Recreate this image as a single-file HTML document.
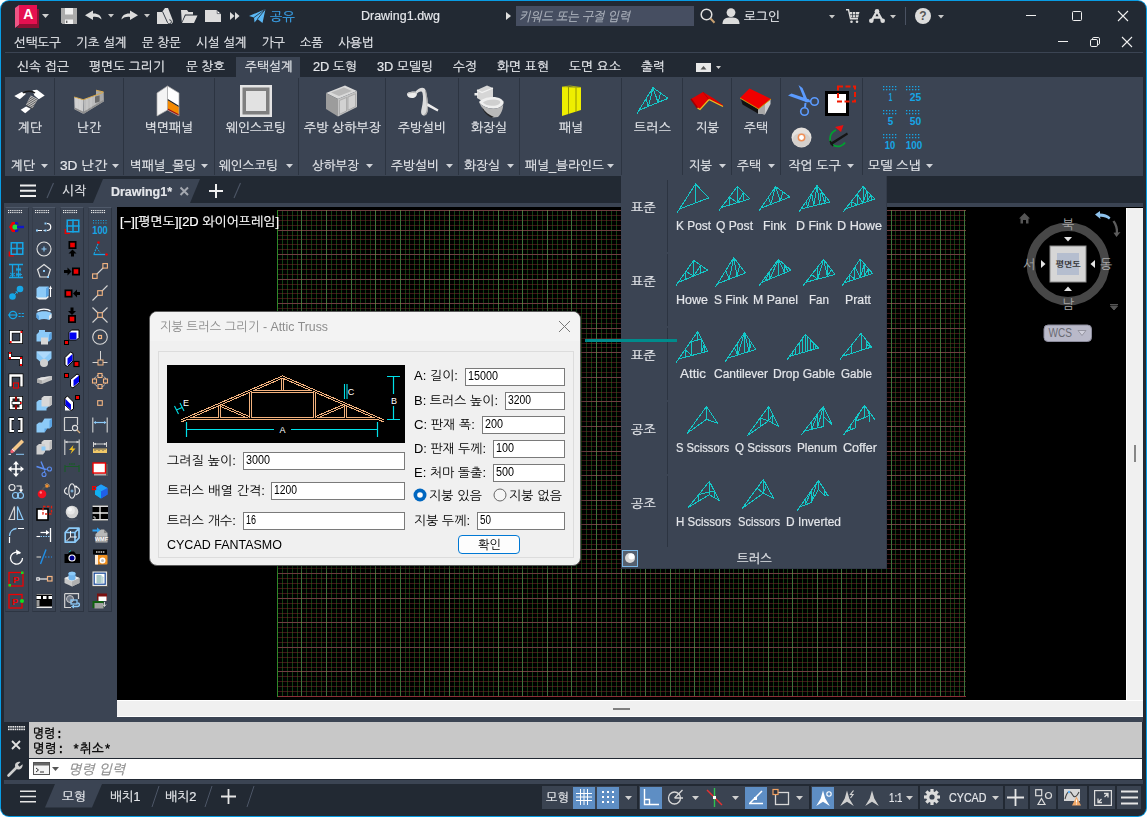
<!DOCTYPE html>
<html lang="ko"><head><meta charset="utf-8"><title>Drawing1.dwg</title>
<style>
html,body{margin:0;padding:0;background:#fff;}
#win{position:relative;width:1147px;height:817px;overflow:hidden;background:#fff;font-family:'Liberation Sans','NanumGothic',sans-serif;}
#win div,#win span.t,#win svg{position:absolute;box-sizing:border-box;}
#win span.t{white-space:nowrap;transform-origin:0 50%;display:block;-webkit-text-stroke:0.2px currentColor;}
svg{overflow:visible}
svg text{font-family:'Liberation Sans','NanumGothic',sans-serif;}
</style></head><body><div id="win">
<div style="left:0px;top:0px;width:1147px;height:817px;background:#089ce4;border-radius:9px;"></div>
<div style="left:1px;top:1px;width:1145px;height:815px;background:#222933;border-radius:8px;"></div>
<span class="t" id="t0" style="left:360.5px;top:7.25px;font:400 13.5px/17.5px 'Liberation Sans','NanumGothic',sans-serif;color:#e4e6ea;transform:scaleX(0.9235);">Drawing1.dwg</span>
<span class="t" id="t1" style="left:269.5px;top:8.75px;font:400 12.5px/16.5px 'Liberation Sans','NanumGothic',sans-serif;color:#3aa0e8;transform:scaleX(1.0631);">공유</span>
<div style="left:516px;top:6px;width:178px;height:20px;background:#464e61;"></div>
<span class="t" id="t2" style="left:518.5px;top:8.75px;font:italic 400 12.5px/16.5px 'Liberation Sans','NanumGothic',sans-serif;color:#aab0ba;transform:scaleX(0.9555);">키워드 또는 구절 입력</span>
<span class="t" id="t3" style="left:743.5px;top:8.75px;font:400 12.5px/16.5px 'Liberation Sans','NanumGothic',sans-serif;color:#e4e6ea;transform:scaleX(1.0208);">로그인</span>
<span class="t" id="t4" style="left:13.5px;top:34.75px;font:400 12.5px/16.5px 'Liberation Sans','NanumGothic',sans-serif;color:#e4e6ea;transform:scaleX(0.9997);">선택도구</span>
<span class="t" id="t5" style="left:75.5px;top:34.75px;font:400 12.5px/16.5px 'Liberation Sans','NanumGothic',sans-serif;color:#e4e6ea;transform:scaleX(1.0102);">기초 설계</span>
<span class="t" id="t6" style="left:141.5px;top:34.75px;font:400 12.5px/16.5px 'Liberation Sans','NanumGothic',sans-serif;color:#e4e6ea;transform:scaleX(1.0069);">문 창문</span>
<span class="t" id="t7" style="left:195.5px;top:34.75px;font:400 12.5px/16.5px 'Liberation Sans','NanumGothic',sans-serif;color:#e4e6ea;transform:scaleX(1.0102);">시설 설계</span>
<span class="t" id="t8" style="left:261.5px;top:34.75px;font:400 12.5px/16.5px 'Liberation Sans','NanumGothic',sans-serif;color:#e4e6ea;transform:scaleX(0.9781);">가구</span>
<span class="t" id="t9" style="left:299.5px;top:34.75px;font:400 12.5px/16.5px 'Liberation Sans','NanumGothic',sans-serif;color:#e4e6ea;transform:scaleX(0.9781);">소품</span>
<span class="t" id="t10" style="left:337.5px;top:34.75px;font:400 12.5px/16.5px 'Liberation Sans','NanumGothic',sans-serif;color:#e4e6ea;transform:scaleX(1.0208);">사용법</span>
<div style="left:5px;top:52px;width:1138px;height:1px;background:#3b4453;"></div>
<div style="left:236px;top:57px;width:64px;height:21px;background:#3b4453;"></div>
<span class="t" id="t11" style="left:16.5px;top:58.75px;font:400 12.5px/16.5px 'Liberation Sans','NanumGothic',sans-serif;color:#e4e6ea;transform:scaleX(1.0300);">신속 접근</span>
<span class="t" id="t12" style="left:88.5px;top:58.75px;font:400 12.5px/16.5px 'Liberation Sans','NanumGothic',sans-serif;color:#e4e6ea;transform:scaleX(1.0272);">평면도 그리기</span>
<span class="t" id="t13" style="left:185.5px;top:58.75px;font:400 12.5px/16.5px 'Liberation Sans','NanumGothic',sans-serif;color:#e4e6ea;transform:scaleX(1.0069);">문 창호</span>
<span class="t" id="t14" style="left:244.5px;top:58.75px;font:400 12.5px/16.5px 'Liberation Sans','NanumGothic',sans-serif;color:#e4e6ea;transform:scaleX(1.0209);">주택설계</span>
<span class="t" id="t15" style="left:312.5px;top:58.75px;font:400 12.5px/16.5px 'Liberation Sans','NanumGothic',sans-serif;color:#e4e6ea;transform:scaleX(1.0244);">2D 도형</span>
<span class="t" id="t16" style="left:376.5px;top:58.75px;font:400 12.5px/16.5px 'Liberation Sans','NanumGothic',sans-serif;color:#e4e6ea;transform:scaleX(1.0237);">3D 모델링</span>
<span class="t" id="t17" style="left:452.5px;top:58.75px;font:400 12.5px/16.5px 'Liberation Sans','NanumGothic',sans-serif;color:#e4e6ea;transform:scaleX(1.0206);">수정</span>
<span class="t" id="t18" style="left:496.5px;top:58.75px;font:400 12.5px/16.5px 'Liberation Sans','NanumGothic',sans-serif;color:#e4e6ea;transform:scaleX(1.0300);">화면 표현</span>
<span class="t" id="t19" style="left:568.5px;top:58.75px;font:400 12.5px/16.5px 'Liberation Sans','NanumGothic',sans-serif;color:#e4e6ea;transform:scaleX(1.0300);">도면 요소</span>
<span class="t" id="t20" style="left:640.5px;top:58.75px;font:400 12.5px/16.5px 'Liberation Sans','NanumGothic',sans-serif;color:#e4e6ea;transform:scaleX(1.0206);">출력</span>
<div style="left:5px;top:77px;width:1138px;height:99px;background:#3b4453;"></div>
<div style="left:54px;top:78px;width:1px;height:97px;background:#2c3441;"></div>
<div style="left:123px;top:78px;width:1px;height:97px;background:#2c3441;"></div>
<div style="left:214px;top:78px;width:1px;height:97px;background:#2c3441;"></div>
<div style="left:298px;top:78px;width:1px;height:97px;background:#2c3441;"></div>
<div style="left:385px;top:78px;width:1px;height:97px;background:#2c3441;"></div>
<div style="left:458px;top:78px;width:1px;height:97px;background:#2c3441;"></div>
<div style="left:519px;top:78px;width:1px;height:97px;background:#2c3441;"></div>
<div style="left:621px;top:78px;width:1px;height:97px;background:#2c3441;"></div>
<div style="left:682px;top:78px;width:1px;height:97px;background:#2c3441;"></div>
<div style="left:731px;top:78px;width:1px;height:97px;background:#2c3441;"></div>
<div style="left:780px;top:78px;width:1px;height:97px;background:#2c3441;"></div>
<div style="left:862px;top:78px;width:1px;height:97px;background:#2c3441;"></div>
<span class="t" id="t21" style="left:17.5px;top:119.75px;font:400 12.5px/16.5px 'Liberation Sans','NanumGothic',sans-serif;color:#e4e6ea;transform:scaleX(1.0206);">계단</span>
<span class="t" id="t22" style="left:76.5px;top:119.75px;font:400 12.5px/16.5px 'Liberation Sans','NanumGothic',sans-serif;color:#e4e6ea;transform:scaleX(1.0206);">난간</span>
<span class="t" id="t23" style="left:144.5px;top:119.75px;font:400 12.5px/16.5px 'Liberation Sans','NanumGothic',sans-serif;color:#e4e6ea;transform:scaleX(1.0209);">벽면패널</span>
<span class="t" id="t24" style="left:225.5px;top:119.75px;font:400 12.5px/16.5px 'Liberation Sans','NanumGothic',sans-serif;color:#e4e6ea;transform:scaleX(1.0210);">웨인스코팅</span>
<span class="t" id="t25" style="left:303.5px;top:119.75px;font:400 12.5px/16.5px 'Liberation Sans','NanumGothic',sans-serif;color:#e4e6ea;transform:scaleX(1.0408);">주방 상하부장</span>
<span class="t" id="t26" style="left:397.5px;top:119.75px;font:400 12.5px/16.5px 'Liberation Sans','NanumGothic',sans-serif;color:#e4e6ea;transform:scaleX(1.0209);">주방설비</span>
<span class="t" id="t27" style="left:470.5px;top:119.75px;font:400 12.5px/16.5px 'Liberation Sans','NanumGothic',sans-serif;color:#e4e6ea;transform:scaleX(1.0208);">화장실</span>
<span class="t" id="t28" style="left:558.5px;top:119.75px;font:400 12.5px/16.5px 'Liberation Sans','NanumGothic',sans-serif;color:#e4e6ea;transform:scaleX(1.0206);">패널</span>
<span class="t" id="t29" style="left:633.5px;top:119.75px;font:400 12.5px/16.5px 'Liberation Sans','NanumGothic',sans-serif;color:#e4e6ea;transform:scaleX(1.0492);">트러스</span>
<span class="t" id="t30" style="left:695.5px;top:119.75px;font:400 12.5px/16.5px 'Liberation Sans','NanumGothic',sans-serif;color:#e4e6ea;transform:scaleX(0.9781);">지붕</span>
<span class="t" id="t31" style="left:743.5px;top:119.75px;font:400 12.5px/16.5px 'Liberation Sans','NanumGothic',sans-serif;color:#e4e6ea;transform:scaleX(1.0206);">주택</span>
<span class="t" id="t32" style="left:10.5px;top:157.75px;font:400 12.5px/16.5px 'Liberation Sans','NanumGothic',sans-serif;color:#e4e6ea;transform:scaleX(1.0206);">계단</span>
<svg style="left:41px;top:164px;" width="7" height="4" viewBox="0 0 7 4"><path d="M0 0H7L3.5 4Z" fill="#d0d3d8"/></svg>
<span class="t" id="t33" style="left:59.5px;top:157.75px;font:400 12.5px/16.5px 'Liberation Sans','NanumGothic',sans-serif;color:#e4e6ea;transform:scaleX(1.0942);">3D 난간</span>
<svg style="left:112px;top:164px;" width="7" height="4" viewBox="0 0 7 4"><path d="M0 0H7L3.5 4Z" fill="#d0d3d8"/></svg>
<span class="t" id="t34" style="left:129.5px;top:157.75px;font:400 12.5px/16.5px 'Liberation Sans','NanumGothic',sans-serif;color:#e4e6ea;transform:scaleX(1.0045);">벽패널_몰딩</span>
<svg style="left:201px;top:164px;" width="7" height="4" viewBox="0 0 7 4"><path d="M0 0H7L3.5 4Z" fill="#d0d3d8"/></svg>
<span class="t" id="t35" style="left:218.5px;top:157.75px;font:400 12.5px/16.5px 'Liberation Sans','NanumGothic',sans-serif;color:#e4e6ea;transform:scaleX(1.0040);">웨인스코팅</span>
<svg style="left:286px;top:164px;" width="7" height="4" viewBox="0 0 7 4"><path d="M0 0H7L3.5 4Z" fill="#d0d3d8"/></svg>
<span class="t" id="t36" style="left:311.5px;top:157.75px;font:400 12.5px/16.5px 'Liberation Sans','NanumGothic',sans-serif;color:#e4e6ea;transform:scaleX(0.9997);">상하부장</span>
<svg style="left:366px;top:164px;" width="7" height="4" viewBox="0 0 7 4"><path d="M0 0H7L3.5 4Z" fill="#d0d3d8"/></svg>
<span class="t" id="t37" style="left:390.5px;top:157.75px;font:400 12.5px/16.5px 'Liberation Sans','NanumGothic',sans-serif;color:#e4e6ea;transform:scaleX(1.0209);">주방설비</span>
<svg style="left:446px;top:164px;" width="7" height="4" viewBox="0 0 7 4"><path d="M0 0H7L3.5 4Z" fill="#d0d3d8"/></svg>
<span class="t" id="t38" style="left:463.5px;top:157.75px;font:400 12.5px/16.5px 'Liberation Sans','NanumGothic',sans-serif;color:#e4e6ea;transform:scaleX(1.0208);">화장실</span>
<svg style="left:507px;top:164px;" width="7" height="4" viewBox="0 0 7 4"><path d="M0 0H7L3.5 4Z" fill="#d0d3d8"/></svg>
<span class="t" id="t39" style="left:524.5px;top:157.75px;font:400 12.5px/16.5px 'Liberation Sans','NanumGothic',sans-serif;color:#e4e6ea;transform:scaleX(1.0200);">패널_블라인드</span>
<svg style="left:607px;top:164px;" width="7" height="4" viewBox="0 0 7 4"><path d="M0 0H7L3.5 4Z" fill="#d0d3d8"/></svg>
<span class="t" id="t40" style="left:688.5px;top:157.75px;font:400 12.5px/16.5px 'Liberation Sans','NanumGothic',sans-serif;color:#e4e6ea;transform:scaleX(0.9781);">지붕</span>
<svg style="left:719px;top:164px;" width="7" height="4" viewBox="0 0 7 4"><path d="M0 0H7L3.5 4Z" fill="#d0d3d8"/></svg>
<span class="t" id="t41" style="left:736.5px;top:157.75px;font:400 12.5px/16.5px 'Liberation Sans','NanumGothic',sans-serif;color:#e4e6ea;transform:scaleX(1.0206);">주택</span>
<svg style="left:768px;top:164px;" width="7" height="4" viewBox="0 0 7 4"><path d="M0 0H7L3.5 4Z" fill="#d0d3d8"/></svg>
<span class="t" id="t42" style="left:787.5px;top:157.75px;font:400 12.5px/16.5px 'Liberation Sans','NanumGothic',sans-serif;color:#e4e6ea;transform:scaleX(1.0498);">작업 도구</span>
<svg style="left:847px;top:164px;" width="7" height="4" viewBox="0 0 7 4"><path d="M0 0H7L3.5 4Z" fill="#d0d3d8"/></svg>
<span class="t" id="t43" style="left:867.5px;top:157.75px;font:400 12.5px/16.5px 'Liberation Sans','NanumGothic',sans-serif;color:#e4e6ea;transform:scaleX(1.0498);">모델 스냅</span>
<svg style="left:926px;top:164px;" width="7" height="4" viewBox="0 0 7 4"><path d="M0 0H7L3.5 4Z" fill="#d0d3d8"/></svg>
<div style="left:5px;top:203px;width:1138px;height:5px;background:#3b4453;"></div>
<svg style="left:90px;top:179px;" width="115" height="24" viewBox="0 0 115 24"><path d="M3 24L13 0H110L100 24Z" fill="#3b4453"/></svg>
<span class="t" id="t44" style="left:61.5px;top:183.25px;font:400 12.5px/16.5px 'Liberation Sans','NanumGothic',sans-serif;color:#e4e6ea;transform:scaleX(1.0206);">시작</span>
<span class="t" id="t45" style="left:110.5px;top:183.75px;font:700 12.5px/16.5px 'Liberation Sans','NanumGothic',sans-serif;color:#e4e6ea;transform:scaleX(0.9977);">Drawing1*</span>
<div style="left:4px;top:203px;width:1139px;height:519px;background:#3b4453;"></div>
<div style="left:117px;top:207px;width:1026px;height:510px;background:#f0f0f0;"></div>
<div style="left:117px;top:207px;width:1009px;height:493px;background:#000;"></div>
<div style="left:1126px;top:207px;width:17px;height:1px;background:#000;"></div>
<div style="left:117px;top:700px;width:1026px;height:1px;background:#fff;"></div>
<div style="left:1126px;top:208px;width:1px;height:492px;background:#fff;"></div>
<div style="left:117px;top:716px;width:1026px;height:1px;background:#fff;"></div>
<div style="left:613px;top:708px;width:17px;height:2px;background:#808080;"></div>
<div style="left:1134px;top:445px;width:2px;height:17px;background:#868686;"></div>
<div style="left:5px;top:207px;width:24px;height:405px;background:#3b4453;border:1px solid #2d3542;border-top-color:#4f5969;border-left-color:#353d4b;"></div>
<svg style="left:8px;top:210px;" width="16" height="5" viewBox="0 0 16 5"><rect x="0.0" y="0" width="1.1" height="1.1" fill="#e8e8e8"/><rect x="0.0" y="2" width="1.1" height="1.1" fill="#e8e8e8"/><rect x="1.85" y="0" width="1.1" height="1.1" fill="#e8e8e8"/><rect x="1.85" y="2" width="1.1" height="1.1" fill="#e8e8e8"/><rect x="3.7" y="0" width="1.1" height="1.1" fill="#e8e8e8"/><rect x="3.7" y="2" width="1.1" height="1.1" fill="#e8e8e8"/><rect x="5.550000000000001" y="0" width="1.1" height="1.1" fill="#e8e8e8"/><rect x="5.550000000000001" y="2" width="1.1" height="1.1" fill="#e8e8e8"/><rect x="7.4" y="0" width="1.1" height="1.1" fill="#e8e8e8"/><rect x="7.4" y="2" width="1.1" height="1.1" fill="#e8e8e8"/><rect x="9.25" y="0" width="1.1" height="1.1" fill="#e8e8e8"/><rect x="9.25" y="2" width="1.1" height="1.1" fill="#e8e8e8"/><rect x="11.100000000000001" y="0" width="1.1" height="1.1" fill="#e8e8e8"/><rect x="11.100000000000001" y="2" width="1.1" height="1.1" fill="#e8e8e8"/><rect x="12.950000000000001" y="0" width="1.1" height="1.1" fill="#e8e8e8"/><rect x="12.950000000000001" y="2" width="1.1" height="1.1" fill="#e8e8e8"/></svg>
<div style="left:32px;top:207px;width:24px;height:405px;background:#3b4453;border:1px solid #2d3542;border-top-color:#4f5969;border-left-color:#353d4b;"></div>
<svg style="left:35px;top:210px;" width="16" height="5" viewBox="0 0 16 5"><rect x="0.0" y="0" width="1.1" height="1.1" fill="#e8e8e8"/><rect x="0.0" y="2" width="1.1" height="1.1" fill="#e8e8e8"/><rect x="1.85" y="0" width="1.1" height="1.1" fill="#e8e8e8"/><rect x="1.85" y="2" width="1.1" height="1.1" fill="#e8e8e8"/><rect x="3.7" y="0" width="1.1" height="1.1" fill="#e8e8e8"/><rect x="3.7" y="2" width="1.1" height="1.1" fill="#e8e8e8"/><rect x="5.550000000000001" y="0" width="1.1" height="1.1" fill="#e8e8e8"/><rect x="5.550000000000001" y="2" width="1.1" height="1.1" fill="#e8e8e8"/><rect x="7.4" y="0" width="1.1" height="1.1" fill="#e8e8e8"/><rect x="7.4" y="2" width="1.1" height="1.1" fill="#e8e8e8"/><rect x="9.25" y="0" width="1.1" height="1.1" fill="#e8e8e8"/><rect x="9.25" y="2" width="1.1" height="1.1" fill="#e8e8e8"/><rect x="11.100000000000001" y="0" width="1.1" height="1.1" fill="#e8e8e8"/><rect x="11.100000000000001" y="2" width="1.1" height="1.1" fill="#e8e8e8"/><rect x="12.950000000000001" y="0" width="1.1" height="1.1" fill="#e8e8e8"/><rect x="12.950000000000001" y="2" width="1.1" height="1.1" fill="#e8e8e8"/></svg>
<div style="left:60px;top:207px;width:24px;height:405px;background:#3b4453;border:1px solid #2d3542;border-top-color:#4f5969;border-left-color:#353d4b;"></div>
<svg style="left:63px;top:210px;" width="16" height="5" viewBox="0 0 16 5"><rect x="0.0" y="0" width="1.1" height="1.1" fill="#e8e8e8"/><rect x="0.0" y="2" width="1.1" height="1.1" fill="#e8e8e8"/><rect x="1.85" y="0" width="1.1" height="1.1" fill="#e8e8e8"/><rect x="1.85" y="2" width="1.1" height="1.1" fill="#e8e8e8"/><rect x="3.7" y="0" width="1.1" height="1.1" fill="#e8e8e8"/><rect x="3.7" y="2" width="1.1" height="1.1" fill="#e8e8e8"/><rect x="5.550000000000001" y="0" width="1.1" height="1.1" fill="#e8e8e8"/><rect x="5.550000000000001" y="2" width="1.1" height="1.1" fill="#e8e8e8"/><rect x="7.4" y="0" width="1.1" height="1.1" fill="#e8e8e8"/><rect x="7.4" y="2" width="1.1" height="1.1" fill="#e8e8e8"/><rect x="9.25" y="0" width="1.1" height="1.1" fill="#e8e8e8"/><rect x="9.25" y="2" width="1.1" height="1.1" fill="#e8e8e8"/><rect x="11.100000000000001" y="0" width="1.1" height="1.1" fill="#e8e8e8"/><rect x="11.100000000000001" y="2" width="1.1" height="1.1" fill="#e8e8e8"/><rect x="12.950000000000001" y="0" width="1.1" height="1.1" fill="#e8e8e8"/><rect x="12.950000000000001" y="2" width="1.1" height="1.1" fill="#e8e8e8"/></svg>
<div style="left:88px;top:207px;width:24px;height:405px;background:#3b4453;border:1px solid #2d3542;border-top-color:#4f5969;border-left-color:#353d4b;"></div>
<svg style="left:91px;top:210px;" width="16" height="5" viewBox="0 0 16 5"><rect x="0.0" y="0" width="1.1" height="1.1" fill="#e8e8e8"/><rect x="0.0" y="2" width="1.1" height="1.1" fill="#e8e8e8"/><rect x="1.85" y="0" width="1.1" height="1.1" fill="#e8e8e8"/><rect x="1.85" y="2" width="1.1" height="1.1" fill="#e8e8e8"/><rect x="3.7" y="0" width="1.1" height="1.1" fill="#e8e8e8"/><rect x="3.7" y="2" width="1.1" height="1.1" fill="#e8e8e8"/><rect x="5.550000000000001" y="0" width="1.1" height="1.1" fill="#e8e8e8"/><rect x="5.550000000000001" y="2" width="1.1" height="1.1" fill="#e8e8e8"/><rect x="7.4" y="0" width="1.1" height="1.1" fill="#e8e8e8"/><rect x="7.4" y="2" width="1.1" height="1.1" fill="#e8e8e8"/><rect x="9.25" y="0" width="1.1" height="1.1" fill="#e8e8e8"/><rect x="9.25" y="2" width="1.1" height="1.1" fill="#e8e8e8"/><rect x="11.100000000000001" y="0" width="1.1" height="1.1" fill="#e8e8e8"/><rect x="11.100000000000001" y="2" width="1.1" height="1.1" fill="#e8e8e8"/><rect x="12.950000000000001" y="0" width="1.1" height="1.1" fill="#e8e8e8"/><rect x="12.950000000000001" y="2" width="1.1" height="1.1" fill="#e8e8e8"/></svg>
<svg style="left:8px;top:219px;" width="16" height="16" viewBox="0 0 16 16"><path d="M1 8L4 3H7V5.5H5.5L4 8L5.5 10.5H7V13H4Z" fill="#f00000"/><path d="M7 3H9.5L11 5.5H8.5L7 5.5ZM7 13H9.5L11 10.5H8.5L7 10.5Z" fill="#1018c8"/><circle cx="7" cy="8" r="2.6" fill="#20e040"/><path d="M9 6.8H16V9.2H9Z" fill="#1018c8"/></svg>
<svg style="left:8px;top:241px;" width="16" height="16" viewBox="0 0 16 16"><rect x="3.25" y="1.75" width="11.5" height="11.5" fill="none" stroke="#16a6e6" stroke-width="1.5"/><path d="M9.0 1V14M2.5 7.5H15.5" stroke="#16a6e6" stroke-width="1.5" fill="none" /><path d="M1.3 10.5V14.8H6.0" stroke="#f00000" stroke-width="1.3" fill="none" /></svg>
<svg style="left:8px;top:263px;" width="16" height="16" viewBox="0 0 16 16"><path d="M1 1.5H15M1 14.5H15M4.5 1.5V14.5M10.5 1.5V14.5" stroke="#16a6e6" stroke-width="1.3" fill="none" /><path d="M8 5L13 8M13 5L8 8M8 6.5H13M2 10L7 13M7 10L2 13M8 10L13 13M13 10L8 13M8 11.5H14" stroke="#16a6e6" stroke-width="0.9" fill="none" /></svg>
<svg style="left:8px;top:285px;" width="16" height="16" viewBox="0 0 16 16"><circle cx="4.5" cy="11.5" r="3.3" fill="#16a6e6"/><circle cx="12" cy="4" r="3.3" fill="#16a6e6"/><path d="M7 9L9 7M7.5 6.800H9.300V8.6" stroke="#16a6e6" stroke-width="1" fill="none" /></svg>
<svg style="left:8px;top:307px;" width="16" height="16" viewBox="0 0 16 16"><circle cx="5" cy="8" r="3.6" fill="none" stroke="#16a6e6" stroke-width="1.3"/><path d="M0 8H9.5" stroke="#16a6e6" stroke-width="1.2" fill="none" /><path d="M10.5 6.5H16M10.5 9.5H16" stroke="#16a6e6" stroke-width="1.1" fill="none" stroke-dasharray="2.2 1"/></svg>
<svg style="left:8px;top:329px;" width="16" height="16" viewBox="0 0 16 16"><rect x="1" y="1" width="14" height="14" fill="#000"/><rect x="1.8" y="1.8" width="12.4" height="12.4" fill="#fff"/><rect x="4.2" y="4.2" width="7.6" height="7.6" fill="#3b4453" stroke="#000" stroke-width=".8"/><rect x="12.5" y="2" width="1.8" height="2" fill="#f00000"/><rect x="1.8" y="12" width="1.8" height="2" fill="#f00000"/></svg>
<svg style="left:8px;top:351px;" width="16" height="16" viewBox="0 0 16 16"><path d="M2 1V7H13V15" stroke="#000" stroke-width="3.6" fill="none" /><path d="M2 1.500V7H13V14.5" stroke="#fff" stroke-width="2.2" fill="none" /><rect x="1" y="1" width="2" height="2" fill="#f00000"/><rect x="1" y="6" width="2" height="2" fill="#f00000"/><rect x="12" y="6" width="2" height="2" fill="#f00000"/><rect x="12" y="13" width="2" height="2" fill="#f00000"/></svg>
<svg style="left:8px;top:373px;" width="16" height="16" viewBox="0 0 16 16"><path d="M2.5 14V2.500H13.500V14" stroke="#000" stroke-width="3.8" fill="none" stroke-linejoin="miter"/><path d="M2.5 13.500V2.500H13.500V13.5" stroke="#fff" stroke-width="2.4" fill="none" /><rect x="5.5" y="10" width="5" height="5" fill="#3b4453" stroke="#f00000" stroke-width="1.1"/></svg>
<svg style="left:8px;top:395px;" width="16" height="16" viewBox="0 0 16 16"><rect x="1" y="1" width="14" height="14" fill="#000"/><rect x="1.8" y="1.8" width="12.4" height="12.4" fill="#fff"/><rect x="4.5" y="3.5" width="7" height="3" fill="#222"/><rect x="4.5" y="9.5" width="7" height="3" fill="#222"/><rect x="7" y="1.8" width="2" height="12.4" fill="#900"/><rect x="4" y="6.5" width="9" height="3" fill="#fff" stroke="#000" stroke-width=".7"/><rect x="12" y="7" width="1.5" height="2" fill="#f00000"/></svg>
<svg style="left:8px;top:417px;" width="16" height="16" viewBox="0 0 16 16"><path d="M6 2H2.500V14H6M10 2H13.500V14H10" stroke="#000" stroke-width="3.6" fill="none" /><path d="M6 2H2.500V14H6M10 2H13.500V14H10" stroke="#fff" stroke-width="2.2" fill="none" /></svg>
<svg style="left:8px;top:439px;" width="16" height="16" viewBox="0 0 16 16"><path d="M13.5 0.500L16 3L7 12L4.5 9.500Z" fill="#f6c98a"/><path d="M4.5 9.500L7 12L5.5 13.500C4.5 14.5 3 14.5 2.5 13.500C2 12.5 2.5 11.5 3 11Z" fill="#f06070"/><path d="M3.8 10.200L6.3 12.700L7 12L4.5 9.500Z" fill="#fff"/><path d="M0.5 15.300H3" stroke="#ffffff" stroke-width="1" fill="none" /><path d="M8 15.300H16" stroke="#8ccaf8" stroke-width="1" fill="none" /></svg>
<svg style="left:8px;top:461px;" width="16" height="16" viewBox="0 0 16 16"><path d="M8 1.500V14.500M1.5 8H14.5" stroke="#ffffff" stroke-width="1.6" fill="none" /><path d="M8 0L11 3.500H5ZM8 16L11 12.500H5ZM0 8L3.5 5V11ZM16 8L12.5 5V11Z" fill="#ffffff"/></svg>
<svg style="left:8px;top:483px;" width="16" height="16" viewBox="0 0 16 16"><circle cx="4" cy="4.5" r="3" fill="none" stroke="#e8e8e8" stroke-width="1.1"/><path d="M8.5 3H13V7.5" stroke="#ffffff" stroke-width="1.2" fill="none" /><path d="M10.8 6.500H15.200L13 9.500Z" fill="#ffffff"/><circle cx="7.5" cy="12.5" r="3" fill="none" stroke="#8ccaf8" stroke-width="1.1"/><circle cx="12.5" cy="12.5" r="3" fill="none" stroke="#8ccaf8" stroke-width="1.1"/></svg>
<svg style="left:8px;top:505px;" width="16" height="16" viewBox="0 0 16 16"><path d="M6.5 1.500V14.500H1Z" stroke="#d4d4d4" stroke-width="1.2" fill="none" /><path d="M9.5 1.500V14.500H15Z" stroke="#8ccaf8" stroke-width="1.2" fill="none" /></svg>
<svg style="left:8px;top:527px;" width="16" height="16" viewBox="0 0 16 16"><path d="M1.5 9C1.5 5 4.5 2 8.5 1.5" stroke="#8ccaf8" stroke-width="1.3" fill="none" /><path d="M1.5 10V16M10 1.500H16" stroke="#ffffff" stroke-width="1.2" fill="none" /></svg>
<svg style="left:8px;top:549px;" width="16" height="16" viewBox="0 0 16 16"><path d="M12.3 4.500A6 6 0 1 0 14.5 9" stroke="#ffffff" stroke-width="1.3" fill="none" /><path d="M8 0.500L13 3.500L8.5 6Z" fill="#ffffff"/></svg>
<svg style="left:8px;top:571px;" width="16" height="16" viewBox="0 0 16 16"><rect x="1" y="1.5" width="14" height="13.5" fill="none" stroke="#f00000" stroke-width="1.3"/><text x="8" y="12" font-size="9" font-weight="700" fill="#f00000" text-anchor="middle">P</text><rect x="13" y="0.5" width="2.5" height="2.5" fill="#10e020"/><rect x="0.5" y="13" width="2.5" height="2.5" fill="#10e020"/></svg>
<svg style="left:8px;top:593px;" width="16" height="16" viewBox="0 0 16 16"><rect x="1" y="1.5" width="13" height="13.5" fill="none" stroke="#f00000" stroke-width="1.3"/><text x="7" y="12" font-size="9" font-weight="700" fill="#f00000" text-anchor="middle">P</text><circle cx="14" cy="8" r="2" fill="#10e020"/></svg>
<svg style="left:36px;top:219px;" width="16" height="16" viewBox="0 0 16 16"><path d="M2 11.500H9" stroke="#ffffff" stroke-width="1.2" fill="none" stroke-dasharray="4 1.5"/><path d="M11 4.500C16 4.5 16 11.5 11 11.5" stroke="#ffffff" stroke-width="1.2" fill="none" /><rect x="0" y="10.5" width="2" height="2" fill="#8ccaf8"/><rect x="8.5" y="10.5" width="2" height="2" fill="#8ccaf8"/><rect x="8.5" y="3.5" width="2" height="2" fill="#8ccaf8"/></svg>
<svg style="left:36px;top:241px;" width="16" height="16" viewBox="0 0 16 16"><circle cx="8" cy="8" r="7" fill="none" stroke="#e0e0e0" stroke-width="1.1"/><path d="M8 5.500V10.500M5.5 8H10.5" stroke="#8ccaf8" stroke-width="1.1" fill="none" /></svg>
<svg style="left:36px;top:263px;" width="16" height="16" viewBox="0 0 16 16"><path d="M8 1.500L14.5 6.500L12 14H4L1.5 6.500Z" stroke="#e0e0e0" stroke-width="1.2" fill="none" /><rect x="7" y="7" width="2" height="2" fill="#8ccaf8"/><rect x="11" y="13" width="2" height="2" fill="#8ccaf8"/></svg>
<svg style="left:36px;top:285px;" width="16" height="16" viewBox="0 0 16 16"><path d="M0.5 13L3 14.500H10L12.5 12.500V11H0.500Z" fill="#f0f0f0"/><path d="M0.5 3.500L3 1.500H12.500V10.500L10 12.500H0.500Z" fill="#8ccaf8"/><path d="M10 3.500L12.5 1.500V10.500L10 12.500Z" fill="#5aa4e4"/><path d="M14.5 3V12" stroke="#ffffff" stroke-width="1.1" fill="none" /><path d="M14.5 0.500L16 4H13Z" fill="#ffffff"/></svg>
<svg style="left:36px;top:307px;" width="16" height="16" viewBox="0 0 16 16"><path d="M1.5 4C4 1.5 12 1.5 14.5 4" stroke="#ffffff" stroke-width="1.2" fill="none" /><path d="M0.5 6C4 3.5 12 3.5 15.5 6V10.500L13 13C10 11.5 6 11.5 3 13L0.5 10.500Z" fill="#8ccaf8"/><path d="M13 9L15.5 6.500V10.500L13 13Z" fill="#e8e8e8"/><path d="M0.5 6.500L3 9V13L0.5 10.500Z" fill="#5aa4e4"/></svg>
<svg style="left:36px;top:329px;" width="16" height="16" viewBox="0 0 16 16"><path d="M3 1H9V3H15.500V10L13 12.500H0.500V5.500L3 3Z" fill="#8ccaf8"/><path d="M13 5.500L15.5 3V10L13 12.500Z" fill="#5aa4e4"/><rect x="5" y="8.5" width="7" height="7" fill="#d8d8d8"/></svg>
<svg style="left:36px;top:351px;" width="16" height="16" viewBox="0 0 16 16"><path d="M0.5 0.500H15.500V7.500L8 14L0.5 7.500Z" fill="#8ccaf8"/><path d="M0.5 0.500L8 8L15.5 0.500Z" fill="#aed9fb"/><circle cx="8" cy="12" r="4" fill="#d0d0d0"/></svg>
<svg style="left:36px;top:373px;" width="16" height="16" viewBox="0 0 16 16"><path d="M1 6L5 4.500L16 3V7L6 11L1 9.500Z" fill="#c4c4c4"/><path d="M1 6L5 4.500L16 3L6 7.500Z" fill="#e2e2e2"/><path d="M1 6L6 7.500V11L1 9.500Z" fill="#a8a8a8"/></svg>
<svg style="left:36px;top:395px;" width="16" height="16" viewBox="0 0 16 16"><path d="M0.5 7L3 5H8V11H13L10.5 13.500V15.500H0.500Z" fill="#8ccaf8"/><path d="M5.5 3L8 1H16V9.500L13.5 11.500H5.500Z" fill="#d8d8d8"/><path d="M13.5 3L16 1V9.500L13.5 11.500Z" fill="#bdbdbd"/></svg>
<svg style="left:36px;top:417px;" width="16" height="16" viewBox="0 0 16 16"><path d="M0.5 7.500L3 5.500H6L8.5 1.500H16V9L13.5 11.500H11L8.5 15.500H0.500Z" fill="#8ccaf8"/><path d="M13.5 3.500L16 1.500V9L13.5 11.500ZM8.5 11.500H11L8.5 15.500Z" fill="#5aa4e4"/></svg>
<svg style="left:36px;top:439px;" width="16" height="16" viewBox="0 0 16 16"><path d="M5.5 3L8 1H16V9.500L13.5 11.500H5.500Z" fill="#d8d8d8"/><path d="M13.5 3L16 1V9.500L13.5 11.500Z" fill="#bdbdbd"/><path d="M0.5 7L3 5H9V13L7 15.500H0.500Z" fill="#cfcfcf"/><rect x="5.5" y="7.5" width="4" height="4" fill="#8ccaf8"/></svg>
<svg style="left:36px;top:461px;" width="16" height="16" viewBox="0 0 16 16"><path d="M5 0.500L8.5 9M0.5 5.500L10 8.5" stroke="#5b8cf0" stroke-width="1.4" fill="none" /><circle cx="13.5" cy="8" r="2" fill="none" stroke="#5b8cf0" stroke-width="1.1"/><circle cx="8" cy="13.5" r="2" fill="none" stroke="#5b8cf0" stroke-width="1.1"/><path d="M9.5 8.500L11.5 8M8.8 9.500L8.3 11.5" stroke="#5b8cf0" stroke-width="1.2" fill="none" /></svg>
<svg style="left:36px;top:483px;" width="16" height="16" viewBox="0 0 16 16"><circle cx="6" cy="11" r="4.3" fill="#f01020"/><circle cx="4.8" cy="9.5" r="1.2" fill="#ff8088"/><path d="M6.5 7C7 5 8.5 4 10 4" stroke="#555" stroke-width="1.3" fill="none" /><circle cx="11" cy="3" r="1.8" fill="#f09030"/><path d="M11 0V1M13 1L12.5 1.800M14 3H13M9 1L9.5 1.8" stroke="#f0c080" stroke-width="0.8" fill="none" /></svg>
<svg style="left:36px;top:505px;" width="16" height="16" viewBox="0 0 16 16"><rect x="1" y="4" width="11" height="11" fill="#fff" stroke="#000" stroke-width="1.6"/><rect x="7" y="1.5" width="8.5" height="7.5" fill="none" stroke="#e02010" stroke-width="1.3" stroke-dasharray="2.5 1.5"/></svg>
<svg style="left:36px;top:527px;" width="16" height="16" viewBox="0 0 16 16"><path d="M4.5 5.500H12" stroke="#ffffff" stroke-width="1.2" fill="none" /><path d="M10 3L13.5 5.500L10 8Z" fill="#ffffff"/><path d="M0.5 9.500H4" stroke="#ffffff" stroke-width="1.1" fill="none" /><path d="M4.5 9.500H13.5" stroke="#8ccaf8" stroke-width="1.1" fill="none" stroke-dasharray="1.5 1"/><path d="M14.5 1V15" stroke="#ffffff" stroke-width="1.3" fill="none" /></svg>
<svg style="left:36px;top:549px;" width="16" height="16" viewBox="0 0 16 16"><path d="M4.5 15L10 0.5" stroke="#2090e8" stroke-width="1.4" fill="none" /><path d="M0.5 8H5" stroke="#a0a0a0" stroke-width="1.6" fill="none" /><path d="M9 8H16" stroke="#2a78c0" stroke-width="1.4" fill="none" stroke-dasharray="1.5 1.5"/></svg>
<svg style="left:36px;top:571px;" width="16" height="16" viewBox="0 0 16 16"><path d="M3 8H12" stroke="#ffffff" stroke-width="1.1" fill="none" /><rect x="0.8" y="6.8" width="2.4" height="2.4" fill="#3b4453" stroke="#fff" stroke-width="1"/><rect x="11.5" y="5.5" width="4.5" height="4.5" fill="#3b4453" stroke="#f4b582" stroke-width="1.2"/></svg>
<svg style="left:36px;top:593px;" width="16" height="16" viewBox="0 0 16 16"><rect x="0.5" y="1" width="15.5" height="14" fill="#000"/><rect x="0.5" y="1" width="15.5" height="1" fill="#888"/><rect x="0.5" y="3" width="4.5" height="3" fill="#fff"/><rect x="7" y="3" width="3.5" height="3" fill="#fff"/><rect x="12.5" y="3" width="3.5" height="3" fill="#fff"/><rect x="0.5" y="7" width="3" height="6" fill="#999"/><rect x="0.5" y="13.5" width="15.5" height="1.5" fill="#eee"/></svg>
<svg style="left:64px;top:219px;" width="16" height="16" viewBox="0 0 16 16"><rect x="3.25" y="1.25" width="11.5" height="11.5" fill="none" stroke="#16a6e6" stroke-width="1.5"/><path d="M9.0 0.5V13.5M2.5 7.0H15.5" stroke="#16a6e6" stroke-width="1.5" fill="none" /><path d="M1.3 10.0V14.3H6.0" stroke="#f00000" stroke-width="1.3" fill="none" /></svg>
<svg style="left:64px;top:241px;" width="16" height="16" viewBox="0 0 16 16"><rect x="4.5" y="0" width="8" height="8" fill="#000"/><rect x="6.2" y="1.7" width="4.6" height="4.6" fill="#f00000"/><path d="M8.5 8.500L12.5 12.500H10V15.500H7V12.500H4.500Z" fill="#000"/></svg>
<svg style="left:64px;top:263px;" width="16" height="16" viewBox="0 0 16 16"><rect x="8" y="4.5" width="8" height="8" fill="#000"/><rect x="9.7" y="6.2" width="4.6" height="4.6" fill="#f00000"/><path d="M7.5 8.500L3.5 4.500V7H0V10H3.500V12.500Z" fill="#000"/></svg>
<svg style="left:64px;top:285px;" width="16" height="16" viewBox="0 0 16 16"><rect x="0.5" y="4.5" width="8" height="8" fill="#000"/><rect x="2.2" y="6.2" width="4.6" height="4.6" fill="#f00000"/><path d="M9 8.500L13 4.500V7H16V10H13V12.500Z" fill="#000"/></svg>
<svg style="left:64px;top:307px;" width="16" height="16" viewBox="0 0 16 16"><rect x="4" y="8" width="8" height="8" fill="#000"/><rect x="5.7" y="9.7" width="4.6" height="4.6" fill="#f00000"/><path d="M8 8L12 4H9.500V0.500H6.500V4H4Z" fill="#000"/></svg>
<svg style="left:64px;top:329px;" width="16" height="16" viewBox="0 0 16 16"><path d="M5 3.500L7.5 1H15V8.500L12.5 11H5Z" fill="#fff"/><path d="M5 3.500L7.5 1H15V8.500L12.5 11H5Z" stroke="#000" stroke-width="1" fill="none" /><rect x="5.5" y="3.5" width="7" height="7" fill="#0000f0"/><rect x="0.5" y="11.5" width="4" height="4" fill="#f00000" stroke="#000" stroke-width="1"/></svg>
<svg style="left:64px;top:351px;" width="16" height="16" viewBox="0 0 16 16"><path d="M1 6.500L6.5 1L9 2.500V10L3.5 15.500L1 14Z" fill="#fff"/><path d="M1 6.500L6.5 1L9 2.500V10L3.5 15.500L1 14Z" stroke="#000" stroke-width="1" fill="none" /><path d="M3.5 7.500L8.5 3V9.500L3.5 14.500Z" fill="#0000f0"/><rect x="10" y="10.5" width="5" height="5" fill="#f00000" stroke="#000" stroke-width="1.2"/></svg>
<svg style="left:64px;top:373px;" width="16" height="16" viewBox="0 0 16 16"><rect x="0.5" y="0.5" width="4" height="4" fill="#f00000" stroke="#000" stroke-width="1"/><path d="M6.5 6.500L13 1L15.5 2.500V9.500L9 15L6.5 13.500Z" fill="#fff"/><path d="M6.5 6.500L13 1L15.5 2.500V9.500L9 15L6.5 13.500Z" stroke="#000" stroke-width="1" fill="none" /><path d="M9.5 7L15 2.500V9L9.5 13.500Z" fill="#0000f0"/></svg>
<svg style="left:64px;top:395px;" width="16" height="16" viewBox="0 0 16 16"><path d="M1 3L3.5 1L9.5 7V14L7 15.500H1Z" fill="#fff"/><path d="M1 3L3.5 1L9.5 7V14L7 15.500L1 10Z" stroke="#000" stroke-width="1" fill="none" /><path d="M1.5 4L7 9.500V15L1.5 10Z" fill="#0000f0"/><rect x="11.5" y="0.5" width="4" height="4" fill="#f00000" stroke="#000" stroke-width="1"/></svg>
<svg style="left:64px;top:417px;" width="16" height="16" viewBox="0 0 16 16"><path d="M0.5 0.500H13.500V8M8 13.500H0.500V0.5" stroke="#d4d4d4" stroke-width="1.2" fill="none" /><circle cx="11" cy="11" r="2.6" fill="none" stroke="#e0e0e0" stroke-width="1.1"/><path d="M13 13L16 16" stroke="#d8b080" stroke-width="1.3" fill="none" /></svg>
<svg style="left:64px;top:439px;" width="16" height="16" viewBox="0 0 16 16"><path d="M0.8 0.500V16M15.2 0.500V16M1 3H15" stroke="#d4d4d4" stroke-width="1.1" fill="none" /><path d="M1 3L3.5 1.800V4.200ZM15 3L12.5 1.800V4.200Z" fill="#d4d4d4"/><path d="M9.5 6L5 11H8L6.5 15L11.5 9.500H8.500Z" fill="#f0c020"/></svg>
<svg style="left:64px;top:461px;" width="16" height="16" viewBox="0 0 16 16"><path d="M1 4V11M15 4V11M1 5.500H15" stroke="#1a5a28" stroke-width="1.2" fill="none" /><path d="M5 3H11" stroke="#1a5a28" stroke-width="1.4" fill="none" stroke-dasharray="1.5 .7"/></svg>
<svg style="left:64px;top:483px;" width="16" height="16" viewBox="0 0 16 16"><ellipse cx="8" cy="8" rx="3.2" ry="7.3" fill="none" stroke="#e8e8e8" stroke-width="1.1"/><path d="M3 4.500C-1 7 0 10.5 4 11.500M11 3.500C17 5 17 10 11.5 12" fill="none" stroke="#e8e8e8" stroke-width="1.1"/><path d="M8 6.500V9.500M6.5 8H9.5" stroke="#8ccaf8" stroke-width="1" fill="none" /><path d="M11 2.500L13.5 3L12 5Z" fill="#ffffff"/></svg>
<svg style="left:64px;top:505px;" width="16" height="16" viewBox="0 0 16 16"><ellipse cx="8" cy="14.8" rx="6.5" ry="0.8" fill="#4a5260"/><circle cx="8" cy="7" r="6.3" fill="#d4d4d4"/><circle cx="6.8" cy="5.5" r="4" fill="#e8e8e8"/><circle cx="6" cy="4.5" r="2" fill="#f6f6f6"/></svg>
<svg style="left:64px;top:527px;" width="16" height="16" viewBox="0 0 16 16"><path d="M1.2 5.500H11V15.200H1.200ZM1.2 5.500L5 1.200H15V11L11 15.200M11 5.500L15 1.2" stroke="#8ccaf8" stroke-width="1.7" fill="none" stroke-linejoin="round"/><path d="M6.5 4V10L2.5 14M6.5 10H13" stroke="#ffffff" stroke-width="0.9" fill="none" /></svg>
<svg style="left:64px;top:549px;" width="16" height="16" viewBox="0 0 16 16"><path d="M0.5 5H4L6 2.500H10L12 5H16V14H0.500Z" fill="#000"/><circle cx="8" cy="9" r="3.6" fill="#fff"/><circle cx="8" cy="9" r="2.5" fill="#000090"/><path d="M5 3L7 1.5" stroke="#10b0b0" stroke-width="1" fill="none" /></svg>
<svg style="left:64px;top:571px;" width="16" height="16" viewBox="0 0 16 16"><path d="M0.5 7L8 4L15.5 7V12L8 15.500L0.5 12Z" fill="#c8c8c8"/><path d="M0.5 7L8 4L15.5 7L8 10.500Z" fill="#eaeaea"/><path d="M8 10.500L15.5 7V12L8 15.500Z" fill="#b0b0b0"/><path d="M4.5 2.500C4.5 0 11.5 0 11.5 2.500V7.500C11.5 10 4.5 10 4.5 7.500Z" fill="#70b4ec"/><ellipse cx="8" cy="2.5" rx="3.5" ry="1.8" fill="#8ccaf8"/></svg>
<svg style="left:64px;top:593px;" width="16" height="16" viewBox="0 0 16 16"><path d="M0.7 0.700H14.500V6M7 14.500H0.700V0.7" stroke="#d4d4d4" stroke-width="1.2" fill="none" /><circle cx="6" cy="6" r="3.5" fill="#707886" stroke="#d0d0d0" stroke-width=".9"/><rect x="7" y="7" width="6" height="4" fill="none" stroke="#8ccaf8" stroke-width="1.3"/><path d="M9 13.500H13.500C16 13.5 16 10 13.5 10" stroke="#8ccaf8" stroke-width="1.4" fill="none" /><path d="M7 13.500L10 11.500V15.500Z" fill="#8ccaf8"/></svg>
<svg style="left:92px;top:219px;" width="16" height="16" viewBox="0 0 16 16"><rect x="1.0" y="1.0" width="1" height="1" fill="#16a6e6"/><rect x="1.0" y="3.5" width="1" height="1" fill="#16a6e6"/><rect x="3.5" y="1.0" width="1" height="1" fill="#16a6e6"/><rect x="3.5" y="3.5" width="1" height="1" fill="#16a6e6"/><rect x="6.0" y="1.0" width="1" height="1" fill="#16a6e6"/><rect x="6.0" y="3.5" width="1" height="1" fill="#16a6e6"/><rect x="8.5" y="1.0" width="1" height="1" fill="#16a6e6"/><rect x="8.5" y="3.5" width="1" height="1" fill="#16a6e6"/><rect x="11.0" y="1.0" width="1" height="1" fill="#16a6e6"/><rect x="11.0" y="3.5" width="1" height="1" fill="#16a6e6"/><rect x="13.5" y="1.0" width="1" height="1" fill="#16a6e6"/><rect x="13.5" y="3.5" width="1" height="1" fill="#16a6e6"/><text x="8" y="15" font-size="10" font-weight="700" fill="#16a6e6" text-anchor="middle" textLength="15.5" lengthAdjust="spacingAndGlyphs">100</text></svg>
<svg style="left:92px;top:241px;" width="16" height="16" viewBox="0 0 16 16"><path d="M1.5 13.500H13.5" stroke="#16a6e6" stroke-width="1.3" fill="none" /><path d="M2 13L6.5 1.5" stroke="#16a6e6" stroke-width="1.1" fill="none" stroke-dasharray="2 1"/><path d="M5 7L8 11.5" stroke="#16a6e6" stroke-width="1" fill="none" stroke-dasharray="1.5 1"/><circle cx="6.5" cy="1.5" r="1.3" fill="#f00000"/><circle cx="14.5" cy="13.5" r="1.3" fill="#f00000"/></svg>
<svg style="left:92px;top:263px;" width="16" height="16" viewBox="0 0 16 16"><path d="M3.5 12.500L12.5 3.5" stroke="#d4d4d4" stroke-width="1.1" fill="none" /><rect x="0.6" y="10.9" width="4.5" height="4.5" fill="#3b4453" stroke="#f4b582" stroke-width="1.1"/><rect x="10.9" y="0.6" width="4.5" height="4.5" fill="#3b4453" stroke="#f4b582" stroke-width="1.1"/></svg>
<svg style="left:92px;top:285px;" width="16" height="16" viewBox="0 0 16 16"><path d="M0.5 15.500L15.5 0.5" stroke="#d4d4d4" stroke-width="1.1" fill="none" /><rect x="5.7" y="5.7" width="4.6" height="4.6" fill="#3b4453" stroke="#f4b582" stroke-width="1.1"/></svg>
<svg style="left:92px;top:307px;" width="16" height="16" viewBox="0 0 16 16"><path d="M0.5 0.500L15.5 15.500M15.5 0.500L0.5 15.5" stroke="#d4d4d4" stroke-width="1.1" fill="none" /><rect x="5.7" y="5.7" width="4.6" height="4.6" fill="#3b4453" stroke="#f4b582" stroke-width="1.1"/></svg>
<svg style="left:92px;top:329px;" width="16" height="16" viewBox="0 0 16 16"><circle cx="8" cy="8" r="7.3" fill="none" stroke="#d8d8d8" stroke-width="1.1"/><rect x="6.5" y="6.5" width="3" height="3" fill="none" stroke="#f4b582" stroke-width="1.2"/></svg>
<svg style="left:92px;top:351px;" width="16" height="16" viewBox="0 0 16 16"><path d="M8.5 0V11M0.5 11.5H15.5" stroke="#d4d4d4" stroke-width="1" fill="none" /><rect x="6" y="9" width="5" height="5" fill="#3b4453" stroke="#f4b582" stroke-width="1"/></svg>
<svg style="left:92px;top:373px;" width="16" height="16" viewBox="0 0 16 16"><circle cx="8" cy="8" r="6" fill="none" stroke="#c4c8cc" stroke-width="1" stroke-dasharray="3 1"/><rect x="6" y="0.5" width="4" height="4" fill="#3b4453" stroke="#f4b582" stroke-width="1.1"/><rect x="6" y="11.5" width="4" height="4" fill="#3b4453" stroke="#f4b582" stroke-width="1.1"/><rect x="0.5" y="6" width="4" height="4" fill="#3b4453" stroke="#f4b582" stroke-width="1.1"/><rect x="11.5" y="6" width="4" height="4" fill="#3b4453" stroke="#f4b582" stroke-width="1.1"/></svg>
<svg style="left:92px;top:395px;" width="16" height="16" viewBox="0 0 16 16"><rect x="5.7" y="5.7" width="4.6" height="4.6" fill="none" stroke="#f4b582" stroke-width="1.1"/></svg>
<svg style="left:92px;top:417px;" width="16" height="16" viewBox="0 0 16 16"><path d="M0.8 0.500V15.500M15.2 0.500V15.5" stroke="#d4d4d4" stroke-width="1.1" fill="none" /><path d="M2 5.500H14" stroke="#8ccaf8" stroke-width="1.2" fill="none" /><path d="M1.5 5.500L4 4V7ZM14.5 5.500L12 4V7Z" fill="#8ccaf8"/></svg>
<svg style="left:92px;top:439px;" width="16" height="16" viewBox="0 0 16 16"><path d="M1.5 3V8M14.5 3V8M2 5H14" stroke="#d4d4d4" stroke-width="1" fill="none" /><path d="M1.5 5L4 3.800V6.200ZM14.5 5L12 3.800V6.200Z" fill="#d4d4d4"/><rect x="1" y="9.5" width="14" height="4.5" fill="#f0c868"/><path d="M3 9.500V12M5 9.500V11M7 9.500V12M9 9.500V11M11 9.500V12M13 9.500V11" stroke="#3b4453" stroke-width="0.8" fill="none" /></svg>
<svg style="left:92px;top:461px;" width="16" height="16" viewBox="0 0 16 16"><rect x="2" y="3" width="14" height="11.5" fill="#b0b0b0"/><rect x="14" y="3" width="2" height="11.5" fill="#000" opacity=".5"/><rect x="1" y="2" width="12.5" height="10" fill="#fff" stroke="#f00000" stroke-width="1.4"/></svg>
<svg style="left:92px;top:483px;" width="16" height="16" viewBox="0 0 16 16"><path d="M3 5L9 1.500L15.5 5V11.500L9 15.500L3 11.500Z" fill="#1880f0"/><path d="M3 5L9 1.500L15.5 5L9 8.500Z" fill="#20a0f8"/><path d="M3 5L9 8.500V15.500L3 11.500Z" fill="#10b0f0"/><path d="M9 8.500L15.5 5V11.500L9 15.500Z" fill="#2060e8"/><rect x="0.6" y="3.6" width="3" height="3" fill="none" stroke="#f00000" stroke-width="1.2"/></svg>
<svg style="left:92px;top:505px;" width="16" height="16" viewBox="0 0 16 16"><rect x="0.5" y="0.5" width="15.5" height="15" fill="#000"/><rect x="0.5" y="0.5" width="15.5" height="1.5" fill="#ddd"/><rect x="0.5" y="14" width="15.5" height="1.5" fill="#ddd"/><path d="M8 2V14M0.5 8H16" stroke="#e8e8e8" stroke-width="1.3" fill="none" /><path d="M2 11V13H4" stroke="#ccc" stroke-width="1" fill="none" /></svg>
<svg style="left:92px;top:527px;" width="16" height="16" viewBox="0 0 16 16"><path d="M0.5 3.500H6" stroke="#30a0f0" stroke-width="2" fill="none" /><path d="M5 0.500L9 3.500L5 6.500Z" fill="#30a0f0"/><path d="M3.5 7L9 2.500H12L15.5 6V15.500H3.500Z" fill="#b8b8b8"/><path d="M12 2.500L15.5 6H12Z" fill="#888"/><rect x="3.5" y="9.5" width="12" height="5" fill="#8a8a8a"/><text x="9.5" y="14" font-size="5.5" font-weight="700" fill="#fff" text-anchor="middle">WMF</text></svg>
<svg style="left:92px;top:549px;" width="16" height="16" viewBox="0 0 16 16"><rect x="1" y="0.5" width="14" height="5" fill="#000"/><path d="M4 3H13" stroke="#ccc" stroke-width="1.6" fill="none" stroke-dasharray="1.5 .8"/><rect x="3" y="6" width="12.5" height="9.5" rx="1" fill="#f09020"/><rect x="3" y="6" width="3" height="9.5" fill="#fff" opacity=".85"/><circle cx="10.5" cy="11.5" r="3" fill="#fff"/><circle cx="10.5" cy="11.5" r="1.5" fill="#bbb"/></svg>
<svg style="left:92px;top:571px;" width="16" height="16" viewBox="0 0 16 16"><rect x="0.5" y="0.5" width="15.5" height="15.5" fill="#555"/><rect x="0.5" y="0.5" width="14.5" height="14.5" fill="#e6e6e6"/><rect x="2.2" y="2.2" width="11" height="11" fill="#fff" stroke="#1a4a9a" stroke-width="1.2"/><path d="M4.5 4H9L11.5 6.500V12H4.500Z" fill="#a8c8c8"/><path d="M10 5V12M11.5 7V12" stroke="#e8f0f0" stroke-width="0.8" fill="none" /></svg>
<svg style="left:92px;top:593px;" width="16" height="16" viewBox="0 0 16 16"><rect x="5" y="0.5" width="10" height="7" fill="#7a1010"/><rect x="6.5" y="3.5" width="8" height="4.5" fill="#fff"/><rect x="0.5" y="8" width="11" height="7" fill="#106010"/><rect x="2.5" y="10" width="9" height="5.5" fill="#a0a0a0"/><path d="M12.5 9V13M11 11.500L12.5 13.500L14 11.5" stroke="#ddd" stroke-width="0.9" fill="none" /></svg>
<div style="left:4px;top:722px;width:1139px;height:61px;background:#222933;"></div>
<div style="left:4px;top:780px;width:1139px;height:4px;background:#3b4453;"></div>
<div style="left:29px;top:722px;width:1113px;height:36px;background:#c8c8c8;"></div>
<div style="left:29px;top:759px;width:1113px;height:20px;background:#fff;"></div>
<span class="t" id="t46" style="left:32.5px;top:725.5px;font:400 13px/17px 'Liberation Mono','NanumGothic',monospace;color:#000;transform:scaleX(0.9302);-webkit-text-stroke:0.35px #000;">명령:</span>
<span class="t" id="t47" style="left:32.5px;top:741.0px;font:400 13px/17px 'Liberation Mono','NanumGothic',monospace;color:#000;transform:scaleX(0.9801);-webkit-text-stroke:0.35px #000;">명령: *취소*</span>
<span class="t" id="t48" style="left:67.5px;top:761.0px;font:italic 400 13px/17px 'Liberation Sans','NanumGothic',sans-serif;color:#909090;transform:scaleX(1.0857);">명령 입력</span>
<svg style="left:8px;top:726px;" width="18" height="5" viewBox="0 0 18 5"><rect x="0.0" y="0.0" width="1.6" height="1.6" fill="#e8e8e8"/><rect x="0.0" y="2.6" width="1.6" height="1.6" fill="#e8e8e8"/><rect x="2.2" y="0.0" width="1.6" height="1.6" fill="#e8e8e8"/><rect x="2.2" y="2.6" width="1.6" height="1.6" fill="#e8e8e8"/><rect x="4.4" y="0.0" width="1.6" height="1.6" fill="#e8e8e8"/><rect x="4.4" y="2.6" width="1.6" height="1.6" fill="#e8e8e8"/><rect x="6.6000000000000005" y="0.0" width="1.6" height="1.6" fill="#e8e8e8"/><rect x="6.6000000000000005" y="2.6" width="1.6" height="1.6" fill="#e8e8e8"/><rect x="8.8" y="0.0" width="1.6" height="1.6" fill="#e8e8e8"/><rect x="8.8" y="2.6" width="1.6" height="1.6" fill="#e8e8e8"/><rect x="11.0" y="0.0" width="1.6" height="1.6" fill="#e8e8e8"/><rect x="11.0" y="2.6" width="1.6" height="1.6" fill="#e8e8e8"/><rect x="13.200000000000001" y="0.0" width="1.6" height="1.6" fill="#e8e8e8"/><rect x="13.200000000000001" y="2.6" width="1.6" height="1.6" fill="#e8e8e8"/><rect x="15.400000000000002" y="0.0" width="1.6" height="1.6" fill="#e8e8e8"/><rect x="15.400000000000002" y="2.6" width="1.6" height="1.6" fill="#e8e8e8"/></svg>
<svg style="left:11px;top:740px;" width="10" height="10" viewBox="0 0 10 10"><path d="M1 1L9 9M9 1L1 9" stroke="#e0e0e0" stroke-width="1.8"/></svg>
<svg style="left:7px;top:761px;" width="17" height="16" viewBox="0 0 17 16"><path d="M1.5 14.500L9 7" stroke="#cfcfcf" stroke-width="2.6" stroke-linecap="round"/><path d="M8 4.500C8 2 10.5 0 13.5 1L10.8 3.800L12.5 5.800L15.5 3.200C16.2 6 14 8.8 11 8.500C9 8.2 8 6.5 8 4.500Z" fill="#cfcfcf"/></svg>
<svg style="left:33px;top:762px;" width="17" height="13" viewBox="0 0 17 13"><rect x=".5" y=".5" width="16" height="12" fill="#f4f4f4" stroke="#555" stroke-width="1"/><rect x="1" y="1" width="15" height="2.5" fill="#666"/><path d="M3 6L5.5 8L3 10M7 10H11" stroke="#333" stroke-width="1" fill="none"/></svg>
<svg style="left:52px;top:767px;" width="7" height="4" viewBox="0 0 7 4"><path d="M0 0H7L3.5 4Z" fill="#555"/></svg>
<div style="left:1px;top:784px;width:1145px;height:25px;background:#222933;"></div>
<svg style="left:40px;top:784px;" width="66" height="24" viewBox="0 0 66 24"><path d="M5 23.500L15 0H62L52 23.500Z" fill="#3b4453"/></svg>
<span class="t" id="t49" style="left:62.0px;top:789.25px;font:400 12.5px/16.5px 'Liberation Sans','NanumGothic',sans-serif;color:#e4e6ea;transform:scaleX(1.0206);">모형</span>
<span class="t" id="t50" style="left:110.0px;top:789.25px;font:400 12.5px/16.5px 'Liberation Sans','NanumGothic',sans-serif;color:#e4e6ea;transform:scaleX(1.0015);">배치1</span>
<span class="t" id="t51" style="left:165.0px;top:789.25px;font:400 12.5px/16.5px 'Liberation Sans','NanumGothic',sans-serif;color:#e4e6ea;transform:scaleX(1.0344);">배치2</span>
<svg style="left:20px;top:790px;" width="17" height="13" viewBox="0 0 17 13"><path d="M0 1.200H16M0 6.500H16M0 11.800H16" stroke="#e6e6e6" stroke-width="1.6"/></svg>
<svg style="left:151px;top:786px;" width="9" height="21" viewBox="0 0 9 21"><path d="M8 0L1 21" stroke="#4c5566" stroke-width="1"/></svg>
<svg style="left:204px;top:786px;" width="9" height="21" viewBox="0 0 9 21"><path d="M8 0L1 21" stroke="#4c5566" stroke-width="1"/></svg>
<svg style="left:246px;top:786px;" width="9" height="21" viewBox="0 0 9 21"><path d="M8 0L1 21" stroke="#4c5566" stroke-width="1"/></svg>
<svg style="left:221px;top:789px;" width="15" height="15" viewBox="0 0 15 15"><path d="M7.5 0V15M0 7.500H15" stroke="#e6e6e6" stroke-width="1.8"/></svg>
<div style="left:542px;top:786px;width:95px;height:23px;background:#3a4351;"></div>
<div style="left:639px;top:786px;width:170px;height:23px;background:#3a4351;"></div>
<div style="left:811px;top:786px;width:107px;height:23px;background:#3a4351;"></div>
<div style="left:920px;top:786px;width:83px;height:23px;background:#3a4351;"></div>
<div style="left:1005px;top:786px;width:23px;height:23px;background:#3a4351;"></div>
<div style="left:1030px;top:786px;width:26px;height:23px;background:#3a4351;"></div>
<div style="left:1058px;top:786px;width:29px;height:23px;background:#3a4351;"></div>
<div style="left:1089px;top:786px;width:26px;height:23px;background:#3a4351;"></div>
<div style="left:1117px;top:786px;width:24px;height:23px;background:#3a4351;"></div>
<span class="t" id="t52" style="left:545.5px;top:789.75px;font:400 12.5px/16.5px 'Liberation Sans','NanumGothic',sans-serif;color:#e4e6ea;transform:scaleX(0.9781);">모형</span>
<div style="left:573px;top:786.5px;width:22px;height:22px;background:#5e8ec4;"></div>
<div style="left:597px;top:786.5px;width:22px;height:22px;background:#5e8ec4;"></div>
<div style="left:640px;top:786.5px;width:22px;height:22px;background:#5e8ec4;"></div>
<div style="left:745px;top:786.5px;width:22px;height:22px;background:#5e8ec4;"></div>
<div style="left:812px;top:786.5px;width:22px;height:22px;background:#5e8ec4;"></div>
<svg style="left:624.5px;top:795.5px;" width="7" height="4" viewBox="0 0 7 4"><path d="M0 0H7L3.5 4Z" fill="#d0d0d0"/></svg>
<svg style="left:691.5px;top:795.5px;" width="7" height="4" viewBox="0 0 7 4"><path d="M0 0H7L3.5 4Z" fill="#d0d0d0"/></svg>
<svg style="left:731.5px;top:795.5px;" width="7" height="4" viewBox="0 0 7 4"><path d="M0 0H7L3.5 4Z" fill="#d0d0d0"/></svg>
<svg style="left:796.0px;top:795.5px;" width="7" height="4" viewBox="0 0 7 4"><path d="M0 0H7L3.5 4Z" fill="#d0d0d0"/></svg>
<svg style="left:906.0px;top:795.5px;" width="7" height="4" viewBox="0 0 7 4"><path d="M0 0H7L3.5 4Z" fill="#d0d0d0"/></svg>
<svg style="left:991.5px;top:795.5px;" width="7" height="4" viewBox="0 0 7 4"><path d="M0 0H7L3.5 4Z" fill="#d0d0d0"/></svg>
<svg style="left:576px;top:789px;" width="16" height="16" viewBox="0 0 16 16"><path d="M4.5 0V16M11.5 0V16M0 4.500H16M0 11.500H16M8 0V16M0 8H16" stroke="#fff" stroke-width="1"/></svg>
<svg style="left:600px;top:789px;" width="16" height="16" viewBox="0 0 16 16"><rect x="2" y="2" width="2" height="2" fill="#fff"/><rect x="2" y="7" width="2" height="2" fill="#fff"/><rect x="2" y="12" width="2" height="2" fill="#fff"/><rect x="7" y="2" width="2" height="2" fill="#fff"/><rect x="7" y="7" width="2" height="2" fill="#fff"/><rect x="7" y="12" width="2" height="2" fill="#fff"/><rect x="12" y="2" width="2" height="2" fill="#fff"/><rect x="12" y="7" width="2" height="2" fill="#fff"/><rect x="12" y="12" width="2" height="2" fill="#fff"/></svg>
<svg style="left:643px;top:789px;" width="16" height="17" viewBox="0 0 16 17"><path d="M1.5 0V15.500H16M1.5 10.500H6.500V15.5" stroke="#fff" stroke-width="1.4" fill="none"/></svg>
<svg style="left:667px;top:789px;" width="17" height="17" viewBox="0 0 17 17"><circle cx="7.5" cy="9" r="6" fill="none" stroke="#d8d8d8" stroke-width="1.3"/><path d="M7.5 9L15.5 1M7.5 9H16" stroke="#d8d8d8" stroke-width="1.3"/></svg>
<svg style="left:706px;top:788px;" width="17" height="19" viewBox="0 0 17 19"><path d="M8.5 0V19" stroke="#30c050" stroke-width="1.4"/><path d="M1 2L16 17" stroke="#e83030" stroke-width="1.4"/><rect x="7" y="8" width="3" height="3" fill="#fff"/></svg>
<svg style="left:748px;top:789px;" width="16" height="16" viewBox="0 0 16 16"><path d="M1 14.500H15M2 14L14 2" stroke="#fff" stroke-width="1.5"/><rect x="6" y="8" width="3" height="3" fill="#fff"/></svg>
<svg style="left:772px;top:788px;" width="18" height="18" viewBox="0 0 18 18"><rect x="3.5" y="4.5" width="13" height="12" fill="none" stroke="#d8d8d8" stroke-width="1.3"/><rect x="1" y="1.5" width="5" height="5" fill="#2c3441" stroke="#f0a060" stroke-width="1.2"/></svg>
<svg style="left:815.5px;top:790px;" width="16" height="17" viewBox="0 0 16 17"><path d="M7 0.5L9.3 8.5L13.8 16L7 11.8L0.2 16L4.7 8.5Z" fill="#fff"/><circle cx="13" cy="4" r="2.2" fill="none" stroke="#fff" stroke-width="1.1"/></svg>
<svg style="left:840px;top:790px;" width="16" height="17" viewBox="0 0 16 17"><path d="M7 0.5L9.3 8.5L13.8 16L7 11.8L0.2 16L4.7 8.5Z" fill="#d0d0d0"/><path d="M13.5 0.5L10.5 4.5H13L10.5 8" stroke="#d0d0d0" stroke-width="1.2" fill="none"/></svg>
<svg style="left:864.5px;top:790px;" width="16" height="17" viewBox="0 0 16 17"><path d="M7 0.5L9.3 8.5L13.8 16L7 11.8L0.2 16L4.7 8.5Z" fill="#d0d0d0"/></svg>
<span class="t" id="t53" style="left:888.5px;top:789.75px;font:400 12.5px/16.5px 'Liberation Sans','NanumGothic',sans-serif;color:#e4e6ea;transform:scaleX(0.7763);">1:1</span>
<svg style="left:923px;top:788px;" width="18" height="18" viewBox="0 0 18 18"><g transform="translate(9 9)"><rect x="-1.6" y="-8" width="3.2" height="4" fill="#dcdcdc" transform="rotate(0)"/><rect x="-1.6" y="-8" width="3.2" height="4" fill="#dcdcdc" transform="rotate(45)"/><rect x="-1.6" y="-8" width="3.2" height="4" fill="#dcdcdc" transform="rotate(90)"/><rect x="-1.6" y="-8" width="3.2" height="4" fill="#dcdcdc" transform="rotate(135)"/><rect x="-1.6" y="-8" width="3.2" height="4" fill="#dcdcdc" transform="rotate(180)"/><rect x="-1.6" y="-8" width="3.2" height="4" fill="#dcdcdc" transform="rotate(225)"/><rect x="-1.6" y="-8" width="3.2" height="4" fill="#dcdcdc" transform="rotate(270)"/><rect x="-1.6" y="-8" width="3.2" height="4" fill="#dcdcdc" transform="rotate(315)"/><circle r="5.8" fill="#dcdcdc"/><circle r="2.6" fill="#3a4351"/></g></svg>
<span class="t" id="t54" style="left:949.0px;top:789.75px;font:400 12.5px/16.5px 'Liberation Sans','NanumGothic',sans-serif;color:#e4e6ea;transform:scaleX(0.8568);">CYCAD</span>
<svg style="left:1007px;top:789px;" width="17" height="17" viewBox="0 0 17 17"><path d="M8.5 0V17M0 8.500H17" stroke="#e6e6e6" stroke-width="1.8"/></svg>
<svg style="left:1035px;top:789px;" width="18" height="17" viewBox="0 0 18 17"><rect x=".7" y=".7" width="6" height="6" fill="none" stroke="#dcdcdc" stroke-width="1.2"/><circle cx="13.5" cy="6.5" r="3" fill="none" stroke="#dcdcdc" stroke-width="1.2"/><path d="M6.5 9.500L10 15.500H3Z" fill="none" stroke="#dcdcdc" stroke-width="1.2"/></svg>
<svg style="left:1064px;top:789px;" width="18" height="18" viewBox="0 0 18 18"><rect x="0" y="0" width="16" height="12" fill="#d6d6d6"/><path d="M1 10C3 2 6 1 8 5C10 9 12 9 15 3" stroke="#444" stroke-width="1.1" fill="none"/><circle cx="5" cy="3" r="1.2" fill="#60b0f0"/><path d="M12.5 7.5L17 16.5H8Z" fill="#f2a868"/><path d="M12.5 10.5V13.5M12.5 14.5V15.5" stroke="#fff" stroke-width="1.1"/></svg>
<svg style="left:1094px;top:790px;" width="18" height="16" viewBox="0 0 18 16"><rect x=".6" y=".6" width="16.8" height="14.8" fill="none" stroke="#dcdcdc" stroke-width="1.2"/><path d="M10 3.500H14V7.500M14 3.500L10.5 7M8 12.500H4V8.500M4 12.500L7.5 9" stroke="#dcdcdc" stroke-width="1.3" fill="none"/></svg>
<svg style="left:1121px;top:790px;" width="17" height="15" viewBox="0 0 17 15"><path d="M0 1.500H17M0 7.500H17M0 13.500H17" stroke="#e6e6e6" stroke-width="1.8"/></svg>
<svg style="left:15px;top:5px;" width="24" height="23" viewBox="0 0 24 23"><path d="M0 3L4 0V20L0 23Z" fill="#ee5585"/><path d="M4 4H24V23H2L4 20Z" fill="#8e0f33"/><path d="M4 0H22V19H4Z" fill="#e51050"/><text x="13.3" y="14.3" font-size="14" font-weight="700" fill="#fff" text-anchor="middle" style="font-family:'Liberation Sans',sans-serif">A</text></svg>
<svg style="left:42px;top:14px;" width="7" height="4" viewBox="0 0 7 4"><path d="M0 0H7L3.5 4Z" fill="#d0d0d0"/></svg>
<svg style="left:61px;top:8px;" width="16" height="16" viewBox="0 0 16 16"><path d="M0 0H16V16H1.5L0 14.5Z" fill="#ababab"/><rect x="4" y="0" width="8" height="6.5" fill="#f0f0f0"/><rect x="4" y="11.5" width="8" height="4.5" fill="#f0f0f0"/><rect x="5" y="12.7" width="1.4" height="2.3" fill="#666"/></svg>
<svg style="left:85px;top:10px;" width="17" height="11" viewBox="0 0 17 11"><path d="M0 5.2L8 0.5V3.6C13 3.4 16.2 5.6 16.5 9.5C14 7 11.5 6.6 8 6.9V10Z" fill="#dcdcdc"/></svg>
<svg style="left:108px;top:14px;" width="6" height="3.5" viewBox="0 0 6 3.5"><path d="M0 0H6L3.0 3.5Z" fill="#c8c8c8"/></svg>
<svg style="left:121px;top:10px;" width="17" height="11" viewBox="0 0 17 11"><path d="M17 5.2L9 0.5V3.6C4 3.4 0.8 5.6 0.5 9.5C3 7 5.5 6.6 9 6.9V10Z" fill="#dcdcdc"/></svg>
<svg style="left:144px;top:14px;" width="6" height="3.5" viewBox="0 0 6 3.5"><path d="M0 0H6L3.0 3.5Z" fill="#c8c8c8"/></svg>
<svg style="left:157px;top:8px;" width="16" height="16" viewBox="0 0 16 16"><path d="M0 4H5L8 0H11L15.5 11.5C16.5 14 15.5 16 13 16H0Z" fill="#dcdcdc"/><path d="M5.5 3.5L10.5 14.5M10.5 14.5A2 2 0 1 0 12.3 11.8" stroke="#222933" stroke-width="0.9" fill="none"/></svg>
<svg style="left:181px;top:10px;" width="17" height="13" viewBox="0 0 17 13"><path d="M0 0H6L7.5 2H12V4.5H4L0.8 12Z" fill="#dcdcdc"/><path d="M4.6 5.5H16.5L13 13H1Z" fill="#dcdcdc"/></svg>
<svg style="left:205px;top:10px;" width="16" height="12" viewBox="0 0 16 12"><path d="M0 0H11.5L16 4V12H0Z" fill="#dcdcdc"/><path d="M12 0V3.8H16" fill="#222933" opacity=".0"/><path d="M12.2 0.3L15.8 3.6H12.2Z" fill="#fff" stroke="#222933" stroke-width=".6"/></svg>
<svg style="left:230px;top:12px;" width="10" height="8" viewBox="0 0 10 8"><path d="M0 0L4.5 4L0 8ZM5 0L9.5 4L5 8Z" fill="#dcdcdc"/></svg>
<svg style="left:249px;top:9px;" width="17" height="15" viewBox="0 0 17 15"><path d="M0 7L16.5 0L13.5 14L8.5 10L5.5 13.5L5 8.5Z" fill="#5bb8f5"/><path d="M5 8.5L16.5 0L8.5 10" stroke="#222933" stroke-width=".8" fill="none"/></svg>
<svg style="left:506px;top:12px;" width="5" height="8" viewBox="0 0 5 8"><path d="M0 0L5 4L0 8Z" fill="#e0e0e0"/></svg>
<svg style="left:700px;top:8px;" width="16" height="16" viewBox="0 0 16 16"><circle cx="6.5" cy="6.5" r="5.3" fill="none" stroke="#e0e0e0" stroke-width="1.5"/><path d="M10.5 10.5L14.5 14.8" stroke="#c8a070" stroke-width="2"/></svg>
<svg style="left:722px;top:8px;" width="18" height="16" viewBox="0 0 18 16"><circle cx="9" cy="4.6" r="4.4" fill="#dcdcdc"/><path d="M0.5 16C0.5 10.5 4 9.5 9 9.5S17.5 10.5 17.5 16Z" fill="#dcdcdc"/></svg>
<svg style="left:829px;top:15px;" width="6" height="3.5" viewBox="0 0 6 3.5"><path d="M0 0H6L3.0 3.5Z" fill="#c8c8c8"/></svg>
<svg style="left:846px;top:9px;" width="14" height="15" viewBox="0 0 14 15"><path d="M0 0.8H2.500L4.5 9.800H12" fill="none" stroke="#dcdcdc" stroke-width="1.4"/><path d="M3.5 3H13.500L12.2 8.500H4.700Z" fill="#dcdcdc"/><path d="M6.5 3V8.500M9.5 3V8.500M4 5.700H13" stroke="#222933" stroke-width=".7"/><circle cx="5.5" cy="12.8" r="1.3" fill="#dcdcdc"/><circle cx="11" cy="12.8" r="1.3" fill="#dcdcdc"/></svg>
<svg style="left:869px;top:9px;" width="16" height="14" viewBox="0 0 16 14"><path d="M8 2L2.5 12M8 2L13.5 12M4.5 8.500H11.5" fill="none" stroke="#dcdcdc" stroke-width="2.4" stroke-linejoin="round"/><circle cx="8" cy="2.2" r="2.3" fill="#dcdcdc"/><circle cx="2.3" cy="11.7" r="2.3" fill="#dcdcdc"/><circle cx="13.7" cy="11.7" r="2.3" fill="#dcdcdc"/></svg>
<svg style="left:890px;top:15px;" width="6" height="3.5" viewBox="0 0 6 3.5"><path d="M0 0H6L3.0 3.5Z" fill="#c8c8c8"/></svg>
<div style="left:905px;top:7px;width:1px;height:18px;background:#4a5262;"></div>
<svg style="left:915px;top:8px;" width="16" height="16" viewBox="0 0 16 16"><circle cx="8" cy="8" r="8" fill="#dcdcdc"/><text x="8" y="12.3" font-size="12" font-weight="700" fill="#555" text-anchor="middle" style="font-family:'Liberation Sans',sans-serif">?</text></svg>
<svg style="left:938px;top:15px;" width="6" height="3.5" viewBox="0 0 6 3.5"><path d="M0 0H6L3.0 3.5Z" fill="#c8c8c8"/></svg>
<svg style="left:1026px;top:10px;" width="10" height="11" viewBox="0 0 10 11"><path d="M0 5.5H10" stroke="#f0f0f0" stroke-width="1"/></svg>
<svg style="left:1072px;top:11px;" width="10" height="10" viewBox="0 0 10 10"><rect x=".5" y=".5" width="9" height="9" rx="1" fill="none" stroke="#f0f0f0" stroke-width="1"/></svg>
<svg style="left:1118px;top:11px;" width="10" height="10" viewBox="0 0 10 10"><path d="M0 0L10 10M10 0L0 10" stroke="#f0f0f0" stroke-width="1.1"/></svg>
<svg style="left:1058px;top:36px;" width="10" height="11" viewBox="0 0 10 11"><path d="M0 5.5H10" stroke="#f0f0f0" stroke-width="1"/></svg>
<svg style="left:1090px;top:37px;" width="10" height="10" viewBox="0 0 10 10"><rect x=".5" y="2.5" width="7" height="7" rx="1.3" fill="none" stroke="#f0f0f0" stroke-width="1"/><path d="M2.5 2.3V1.8Q2.5 .5 3.8 .5H8.2Q9.5 .5 9.5 1.8V6.2Q9.5 7.5 8.2 7.5H7.8" fill="none" stroke="#f0f0f0" stroke-width="1"/></svg>
<svg style="left:1122px;top:37px;" width="10" height="10" viewBox="0 0 10 10"><path d="M0 0L10 10M10 0L0 10" stroke="#f0f0f0" stroke-width="1.1"/></svg>
<svg style="left:696px;top:63px;" width="16" height="9" viewBox="0 0 16 9"><rect width="15" height="9" fill="#e8e8e8"/><path d="M4.5 6.5H10.5L7.5 3Z" fill="#555"/></svg>
<svg style="left:716px;top:66px;" width="5" height="3" viewBox="0 0 5 3"><path d="M0 0H5L2.5 3Z" fill="#d0d0d0"/></svg>
<svg style="left:20px;top:184px;" width="17" height="14" viewBox="0 0 17 14"><path d="M0 1.5H16M0 6.7H16M0 12H16" stroke="#eeeeee" stroke-width="2"/></svg>
<svg style="left:46px;top:183px;" width="8" height="16" viewBox="0 0 8 16"><path d="M7.5 0L1 15" stroke="#4c5565" stroke-width="1.1"/></svg>
<svg style="left:180px;top:187px;" width="9" height="9" viewBox="0 0 9 9"><path d="M0.5 0.5L8 8M8 0.5L0.5 8" stroke="#a4a8b0" stroke-width="2"/></svg>
<svg style="left:209px;top:184px;" width="14" height="14" viewBox="0 0 14 14"><path d="M7 0V14M0 7H14" stroke="#f0f0f0" stroke-width="2"/></svg>
<svg style="left:233px;top:183px;" width="8" height="16" viewBox="0 0 8 16"><path d="M7.5 0L1 15" stroke="#4c5565" stroke-width="1.1"/></svg>
<svg style="left:0;top:0" width="1147" height="817" viewBox="0 0 1147 817"><path d="M14.3 96L21.6 92L26.1 93.8L19.8 99.2Z" fill="#fff"/><path d="M32.5 90.2L37 89.7L44.7 95.6L38.8 99.2L34.3 95.6Z" fill="#fff"/><path d="M23 93C26 90.5 32 90.5 35 93" stroke="#1a1a1a" stroke-width="1.5" fill="none"/><path d="M30.7 95.6L37.9 99.2L32.5 108.3L26.1 104.7Z" fill="#d4d4d4"/><path d="M30.2 96.6L37.2 100.2M29.5 98.0L36.5 101.7M28.8 99.5L35.8 103.1M28.0 100.9L35.0 104.5M27.3 102.4L34.3 106.0M26.6 103.8L33.6 107.5M25.9 105.3L32.9 108.9" stroke="#444" stroke-width=".8"/><path d="M20.7 109.7L26.1 106.5L30.7 108.7L25.2 113.3Z" fill="#fff"/><path d="M74.2 97L83.3 99.7V113.7L74.6 109.2Z" fill="#cdcdcd"/><path d="M83.3 99.7L103.2 92.400L103.6 101.5L83.7 113.7Z" fill="#bcbcbc"/><path d="M96 90.2L103.6 92V101.5L96 104Z" fill="#a8a8a8"/><path d="M95 96.5L99.6 95.6V101.5L95 103Z" fill="#6a6a6a"/><path d="M74.6 107.5L83.5 111.8L103.6 99.8V101.5L83.7 113.7L74.6 109.2Z" fill="#8e8e8e"/><path d="M74.2 97L83.3 99.7L103.2 92.400M96 90.2L103.6 92" stroke="#d8a848" stroke-width="1" fill="none"/><path d="M77 98V108M80 99V110M87 98.5V110.5M91 97V108.5" stroke="#e0e0e0" stroke-width=".7" opacity=".6"/></svg>
<svg style="left:157px;top:86px;" width="23" height="31" viewBox="0 0 23 31"><path d="M0 7L10.5 0V24L0 30Z" fill="#f4f4f4"/><path d="M10.5 0L22 7V30L10.5 24Z" fill="#fff"/><path d="M10.5 14L22 21V30L10.5 24Z" fill="#f58a00"/><path d="M10.5 13.5L22 20.5" stroke="#222" stroke-width="1.2"/><path d="M10.5 23.3L22 29.3" stroke="#a01010" stroke-width="1.6"/><path d="M0 7L10.5 0L22 7V30L10.5 24L0 30ZM10.5 0V24" stroke="#aaa" stroke-width=".7" fill="none"/></svg>
<svg style="left:240px;top:85px;" width="32" height="32" viewBox="0 0 32 32"><rect width="32" height="32" fill="#e4e4e4"/><rect x="2.5" y="2.5" width="27" height="27" fill="#7f7f7f"/><rect x="6" y="6" width="20" height="20" fill="#e2e2e2"/></svg>
<svg style="left:326px;top:85px;" width="32" height="32" viewBox="0 0 32 32"><path d="M0 8L19 0.5L31 6L12 14Z" fill="#dadada"/><path d="M5 7.5L18 2.5L26 6L13 11Z" fill="#b9b9b9"/><path d="M0 8L12 14V31.5L0 24Z" fill="#9c9c9c"/><path d="M12 14L31 6V22L12 31.5Z" fill="#c4c4c4"/><path d="M13.5 15.5L20.5 12.5V26L13.5 29.3ZM22 12L29.5 8.8V21.5L22 25.2Z" fill="#d2d2d2" stroke="#999" stroke-width=".6"/></svg>
<svg style="left:406px;top:86px;" width="33" height="30" viewBox="0 0 33 30"><path d="M1 8C1 5.5 11 4.5 11 7C11 10.5 9 12 6 12C3 12 1 10.5 1 8Z" fill="#ececec"/><path d="M1.5 7.500C3.5 6.5 9 6 10.5 7" stroke="#b8b8b8" stroke-width="1" fill="none"/><path d="M9.5 5.500C13 1.5 18 0 19.5 4C21 9 22 15 22 21C22 26 20.5 29.5 18 29.500C15.5 29.5 14.5 27 15.5 23C17 17 17.5 11 16.5 7C15.8 4.5 13 5.5 11 7.500Z" fill="#dcdcdc"/><path d="M19.5 4.500C20.5 10 21.5 16 21.5 21C21.5 25 20.5 28 18.5 29" stroke="#a4a4a4" stroke-width="1.2" fill="none"/><path d="M21.5 17L32.5 23.500L31.5 25.500L21 20Z" fill="#ededed"/></svg>
<svg style="left:474px;top:85px;" width="31" height="33" viewBox="0 0 31 33"><path d="M3 5L13 0.5L19 3V12L8 16L3 13Z" fill="#d6d6d6"/><path d="M3 5L8 7.5L19 3" stroke="#f2f2f2" stroke-width="1.2" fill="none"/><path d="M0.5 8H4V10.5H0.5Z" fill="#eee"/><path d="M5 17C8 13 20 10 27 14C31 16.5 30 21 24 23C17 25 8 22 5 17Z" fill="#efefef"/><path d="M9 17.5C12 15 20 13.5 25 15.5C27.5 17 26 19.5 22 20.5C17 21.5 11 20 9 17.5Z" fill="#cfcfcf"/><path d="M5 17C8 22 17 25 24 23C30 21 31 17 29 15.5C30 22 28 28 24 32L19 32.5C13 30 8 24 5 17Z" fill="#b9b9b9"/><path d="M8 22C11 27 15 30 20 32L17 32.5C12 30 9 26 8 22Z" fill="#222"/></svg>
<svg style="left:562px;top:86px;" width="20" height="31" viewBox="0 0 20 31"><path d="M0 1L19 1.5V24L0 30Z" fill="#eeee00"/><path d="M6.5 1.200V28M14 1.400V26" stroke="#8a8a00" stroke-width=".9"/><path d="M0 1L8 0L19 1.5" stroke="#c8c800" stroke-width=".8" fill="none"/></svg>
<svg style="left:690px;top:91px;" width="34" height="20" viewBox="0 0 34 20"><path d="M1 8L13 1L23 7L33 14V15.5L19 8.5L10 18.5L7.5 17Z" fill="#e00000"/><path d="M1 8L7.5 17" stroke="#a00000" stroke-width="1.5"/><path d="M7.5 17L10 18.5L19 8.5L33 15.5" stroke="#e8c020" stroke-width="1.3" fill="none"/><path d="M13 1L19 8.5" stroke="#b00000" stroke-width=".8"/></svg>
<svg style="left:739px;top:87px;" width="33" height="28" viewBox="0 0 33 28"><path d="M2 12.500L19 22V26.500L3.5 17.500Z" fill="#111"/><path d="M19 22L31.5 12V17L26 27.500L19 26.500Z" fill="#cfcfcf"/><path d="M19 22L26 16.500V27.500L19 26.500Z" fill="#a8a8a8"/><path d="M1 11L10.5 1.500L32 12L19.5 22Z" fill="#f00000"/><path d="M1 11L19.5 22L32 12" stroke="#c8a000" stroke-width=".9" fill="none"/></svg>
<svg style="left:787px;top:84px;" width="33" height="33" viewBox="0 0 33 33"><path d="M11.5 1L15.5 4L21 17L18.5 18.500ZM1 11.500L4.5 9.500L22.5 15.500L20.5 18.500Z" fill="#5b9bff"/><circle cx="27.5" cy="17.5" r="3.8" fill="none" stroke="#5b9bff" stroke-width="1.6"/><circle cx="17.5" cy="27.5" r="3.8" fill="none" stroke="#5b9bff" stroke-width="1.6"/><path d="M20.5 17L24 17.500M18.5 19L18 23.5" stroke="#5b9bff" stroke-width="2"/></svg>
<svg style="left:825px;top:85px;" width="32" height="31" viewBox="0 0 32 31"><rect x="1.5" y="7.5" width="21" height="22" fill="#fff" stroke="#000" stroke-width="3"/><rect x="13" y="1.5" width="17" height="15" fill="none" stroke="#f01800" stroke-width="2" stroke-dasharray="5 2.5"/></svg>
<svg style="left:791px;top:127px;" width="21" height="21" viewBox="0 0 21 21"><circle cx="10.5" cy="10.5" r="10" fill="#e4e0dc"/><ellipse cx="10.5" cy="13" rx="9" ry="7" fill="#cfc9c4" opacity=".7"/><circle cx="10.5" cy="10.5" r="3.2" fill="#fff" stroke="#f09058" stroke-width="1.5"/></svg>
<svg style="left:827px;top:124px;" width="23" height="24" viewBox="0 0 23 24"><path d="M9 6C2 9 1 18 7 21.5C11 23.5 16 22 18 18.5" fill="none" stroke="#00a030" stroke-width="1.8"/><path d="M8 3L16.5 1L14 8Z" fill="#e81010"/><path d="M3 19L20 8.5L21 10.5L4 21.5Z" fill="#151515"/><path d="M3 17L6 22" stroke="#151515" stroke-width="1.5"/></svg>
<svg style="left:0;top:0" width="1147" height="817" viewBox="0 0 1147 817"><path d="M637.0 113.4L653.0 87.6L668.0 98.4M638.9 110.3L668.0 98.4M646.0 99.0L648.3 106.5L653.0 87.6L658.0 102.5L660.5 93.0" fill="none" stroke="#14c8c8" stroke-width="1.0" stroke-linejoin="round" shape-rendering="crispEdges"/></svg>
<svg style="left:0;top:0;isolation:isolate" width="1147" height="817" viewBox="0 0 1147 817"><g shape-rendering="crispEdges" style="mix-blend-mode:normal"><path d="M277 691.5H966M277 686.5H966M277 681.5H966M277 676.5H966M277 667.5H966M277 662.5H966M277 657.5H966M277 652.5H966M277 642.5H966M277 637.5H966M277 632.5H966M277 627.5H966M277 617.5H966M277 613.5H966M277 608.5H966M277 603.5H966M277 593.5H966M277 588.5H966M277 583.5H966M277 578.5H966M277 568.5H966M277 563.5H966M277 559.5H966M277 554.5H966M277 544.5H966M277 539.5H966M277 534.5H966M277 529.5H966M277 519.5H966M277 514.5H966M277 509.5H966M277 505.5H966M277 495.5H966M277 490.5H966M277 485.5H966M277 480.5H966M277 470.5H966M277 465.5H966M277 460.5H966M277 455.5H966M277 446.5H966M277 441.5H966M277 436.5H966M277 431.5H966M277 421.5H966M277 416.5H966M277 411.5H966M277 406.5H966M277 397.5H966M277 392.5H966M277 387.5H966M277 382.5H966M277 372.5H966M277 367.5H966M277 362.5H966M277 357.5H966M277 347.5H966M277 343.5H966M277 338.5H966M277 333.5H966M277 323.5H966M277 318.5H966M277 313.5H966M277 308.5H966M277 298.5H966M277 293.5H966M277 289.5H966M277 284.5H966M277 274.5H966M277 269.5H966M277 264.5H966M277 259.5H966M277 249.5H966M277 244.5H966M277 239.5H966M277 235.5H966M277 225.5H966M277 220.5H966M277 215.5H966" stroke="#401618" stroke-width="1"/><path d="M277 696.5H966M277 671.5H966M277 647.5H966M277 622.5H966M277 598.5H966M277 573.5H966M277 549.5H966M277 524.5H966M277 500.5H966M277 475.5H966M277 451.5H966M277 426.5H966M277 401.5H966M277 377.5H966M277 352.5H966M277 328.5H966M277 303.5H966M277 279.5H966M277 254.5H966M277 230.5H966M277 210.5H966" stroke="#703e40" stroke-width="1"/><g style="mix-blend-mode:lighten"><path d="M282.5 210V697M287.5 210V697M292.5 210V697M297.5 210V697M306.5 210V697M311.5 210V697M316.5 210V697M321.5 210V697M331.5 210V697M336.5 210V697M341.5 210V697M346.5 210V697M355.5 210V697M360.5 210V697M365.5 210V697M370.5 210V697M380.5 210V697M385.5 210V697M390.5 210V697M395.5 210V697M405.5 210V697M409.5 210V697M414.5 210V697M419.5 210V697M429.5 210V697M434.5 210V697M439.5 210V697M444.5 210V697M454.5 210V697M459.5 210V697M463.5 210V697M468.5 210V697M478.5 210V697M483.5 210V697M488.5 210V697M493.5 210V697M503.5 210V697M508.5 210V697M513.5 210V697M517.5 210V697M527.5 210V697M532.5 210V697M537.5 210V697M542.5 210V697M552.5 210V697M557.5 210V697M562.5 210V697M567.5 210V697M576.5 210V697M581.5 210V697M586.5 210V697M591.5 210V697M601.5 210V697M606.5 210V697M611.5 210V697M616.5 210V697M625.5 210V697M630.5 210V697M635.5 210V697M640.5 210V697M650.5 210V697M655.5 210V697M660.5 210V697M665.5 210V697M675.5 210V697M679.5 210V697M684.5 210V697M689.5 210V697M699.5 210V697M704.5 210V697M709.5 210V697M714.5 210V697M724.5 210V697M729.5 210V697M733.5 210V697M738.5 210V697M748.5 210V697M753.5 210V697M758.5 210V697M763.5 210V697M773.5 210V697M778.5 210V697M783.5 210V697M787.5 210V697M797.5 210V697M802.5 210V697M807.5 210V697M812.5 210V697M822.5 210V697M827.5 210V697M832.5 210V697M837.5 210V697M846.5 210V697M851.5 210V697M856.5 210V697M861.5 210V697M871.5 210V697M876.5 210V697M881.5 210V697M886.5 210V697M895.5 210V697M900.5 210V697M905.5 210V697M910.5 210V697M920.5 210V697M925.5 210V697M930.5 210V697M935.5 210V697M945.5 210V697M950.5 210V697M954.5 210V697M959.5 210V697" stroke="#133f13" stroke-width="1"/><path d="M277.5 210V697M301.5 210V697M326.5 210V697M351.5 210V697M375.5 210V697M400.5 210V697M424.5 210V697M449.5 210V697M473.5 210V697M498.5 210V697M522.5 210V697M547.5 210V697M571.5 210V697M596.5 210V697M621.5 210V697M645.5 210V697M670.5 210V697M694.5 210V697M719.5 210V697M743.5 210V697M768.5 210V697M792.5 210V697M817.5 210V697M841.5 210V697M866.5 210V697M891.5 210V697M915.5 210V697M940.5 210V697M964.5 210V697" stroke="#3d733a" stroke-width="1"/></g><path d="M277 696.5H966" stroke="#8a3036" stroke-width="1"/><path d="M277.5 210V697" stroke="#2f8a2a" stroke-width="1"/></g></svg>
<span class="t" id="t55" style="left:119.5px;top:213.75px;font:400 12.5px/16.5px 'Liberation Sans','NanumGothic',sans-serif;color:#ffffff;transform:scaleX(1.0369);">[−][평면도][2D 와이어프레임]</span>
<svg style="left:0;top:0" width="1147" height="817" viewBox="0 0 1147 817"><circle cx="1068" cy="264" r="37.2" fill="none" stroke="#474747" stroke-width="8.4"/><rect x="1050" y="246" width="36" height="36" fill="#d6d6d6" stroke="#8a8a8a" stroke-width="1"/><rect x="1057" y="253" width="22" height="22" fill="#b5becf"/><text x="1068" y="267" font-size="8" fill="#333" text-anchor="middle" font-weight="700" textLength="25" lengthAdjust="spacingAndGlyphs">평면도</text><text x="1068" y="229" font-size="13" fill="#a6a6a6" text-anchor="middle">북</text><text x="1068" y="309" font-size="13" fill="#a6a6a6" text-anchor="middle">남</text><text x="1029" y="268.5" font-size="13" fill="#a6a6a6" text-anchor="middle">서</text><text x="1106" y="268.5" font-size="13" fill="#a6a6a6" text-anchor="middle">동</text><path d="M1064 237H1072L1068 241.5Z" fill="#e4e4e4"/><path d="M1064 291H1072L1068 286.5Z" fill="#e4e4e4"/><path d="M1041 260V268L1045.5 264Z" fill="#e4e4e4"/><path d="M1095 260V268L1090.5 264Z" fill="#e4e4e4"/><path d="M1019 218.5L1024.5 213L1030 218.5H1028.5V223.5H1026V220H1023V223.5H1020.5V218.5Z" fill="#555"/><path d="M1095 214.5L1100 211L1100 213.5C1104 213.5 1108 215 1110.5 217.5L1109 219.5C1106.5 217.5 1103 216.5 1100 216.8L1100.5 219Z" fill="#8ec2ec"/><path d="M1112.5 221.5L1114.5 220.5C1117 224 1118.5 228.5 1118 232.5L1120.5 232L1116.5 237L1113.5 232.8L1115.8 232.5C1116 229 1115 225 1112.5 221.5Z" fill="#5c5c5c"/><path d="M1110 304.5H1118M1110.5 306H1117.5L1114 310Z" stroke="#555" fill="#555" stroke-width="1"/><rect x="1044" y="325" width="47.5" height="16.5" rx="4" fill="#b9b9c9" stroke="#8c8c9c" stroke-width="1"/><text x="1048.5" y="337" font-size="12" fill="#6a6a72" textLength="23.5" lengthAdjust="spacingAndGlyphs">WCS</text><path d="M1078 330.5H1086L1082 335.5Z" fill="#d0d0dc" stroke="#8a8a96" stroke-width=".8"/></svg>
<div style="left:621px;top:176px;width:266px;height:393px;background:#3b4453;"></div>
<div style="left:886px;top:176px;width:1px;height:393px;background:#333b49;"></div>
<div style="left:621px;top:568px;width:266px;height:1px;background:#333b49;"></div>
<div style="left:667px;top:180px;width:1px;height:72px;background:#2c3441;"></div>
<div style="left:667px;top:254px;width:1px;height:72px;background:#2c3441;"></div>
<div style="left:667px;top:328px;width:1px;height:72px;background:#2c3441;"></div>
<div style="left:667px;top:402px;width:1px;height:72px;background:#2c3441;"></div>
<div style="left:667px;top:476px;width:1px;height:71px;background:#2c3441;"></div>
<span class="t" id="t56" style="left:630.5px;top:199.75px;font:400 12.5px/16.5px 'Liberation Sans','NanumGothic',sans-serif;color:#e4e6ea;transform:scaleX(1.0631);">표준</span>
<span class="t" id="t57" style="left:630.5px;top:273.75px;font:400 12.5px/16.5px 'Liberation Sans','NanumGothic',sans-serif;color:#e4e6ea;transform:scaleX(1.0631);">표준</span>
<span class="t" id="t58" style="left:630.5px;top:347.75px;font:400 12.5px/16.5px 'Liberation Sans','NanumGothic',sans-serif;color:#e4e6ea;transform:scaleX(1.0631);">표준</span>
<span class="t" id="t59" style="left:630.5px;top:421.75px;font:400 12.5px/16.5px 'Liberation Sans','NanumGothic',sans-serif;color:#e4e6ea;transform:scaleX(1.0631);">공조</span>
<span class="t" id="t60" style="left:630.5px;top:495.75px;font:400 12.5px/16.5px 'Liberation Sans','NanumGothic',sans-serif;color:#e4e6ea;transform:scaleX(1.0631);">공조</span>
<svg style="left:0;top:0" width="1147" height="817" viewBox="0 0 1147 817"><path d="M677.3 212.4L695.5 184.0L708.7 197.9M679.5 209.0L708.7 197.9M695.5 202.9L695.5 184.0" fill="none" stroke="#14c8c8" stroke-width="1.0" stroke-linejoin="round" shape-rendering="crispEdges"/></svg>
<span class="t" id="t61" style="left:675.5px;top:217.75px;font:400 12.5px/16.5px 'Liberation Sans','NanumGothic',sans-serif;color:#e4e6ea;transform:scaleX(0.9504);">K Post</span>
<svg style="left:0;top:0" width="1147" height="817" viewBox="0 0 1147 817"><path d="M719.0 210.5L737.3 186.6L750.0 198.8M721.2 207.6L750.0 198.8M737.3 202.7L737.3 186.6M737.3 202.7L729.2 197.1M737.3 202.7L743.6 192.7M729.2 205.2L729.2 197.1M743.6 200.7L743.6 192.7" fill="none" stroke="#14c8c8" stroke-width="1.0" stroke-linejoin="round" shape-rendering="crispEdges"/></svg>
<span class="t" id="t62" style="left:715.5px;top:217.75px;font:400 12.5px/16.5px 'Liberation Sans','NanumGothic',sans-serif;color:#e4e6ea;transform:scaleX(0.9681);">Q Post</span>
<svg style="left:0;top:0" width="1147" height="817" viewBox="0 0 1147 817"><path d="M759.0 211.0L775.6 186.6L790.0 197.0M761.0 208.1L790.0 197.0M768.3 197.3L770.7 204.4L775.6 186.6L780.4 200.7L782.8 191.8" fill="none" stroke="#14c8c8" stroke-width="1.0" stroke-linejoin="round" shape-rendering="crispEdges"/></svg>
<span class="t" id="t63" style="left:762.5px;top:217.75px;font:400 12.5px/16.5px 'Liberation Sans','NanumGothic',sans-serif;color:#e4e6ea;transform:scaleX(0.9735);">Fink</span>
<svg style="left:0;top:0" width="1147" height="817" viewBox="0 0 1147 817"><path d="M799.0 212.0L817.0 185.6L830.0 202.0M801.2 208.8L830.0 202.0M806.4 201.1L807.5 207.3L811.7 193.3L813.8 205.8L817.0 185.6L819.6 204.5L821.3 191.1L824.8 203.2L825.7 196.5M813.8 205.8L817.0 185.6M811.7 193.3L807.5 207.3" fill="none" stroke="#14c8c8" stroke-width="1.0" stroke-linejoin="round" shape-rendering="crispEdges"/></svg>
<span class="t" id="t64" style="left:795.5px;top:217.75px;font:400 12.5px/16.5px 'Liberation Sans','NanumGothic',sans-serif;color:#e4e6ea;transform:scaleX(0.9965);">D Fink</span>
<svg style="left:0;top:0" width="1147" height="817" viewBox="0 0 1147 817"><path d="M843.0 212.0L863.0 186.6L875.0 199.0M845.4 209.0L875.0 199.0M851.3 207.0L851.3 201.5M857.1 205.0L857.1 194.1M863.0 203.0L863.0 186.6M867.0 201.7L867.0 190.7M871.0 200.3L871.0 194.9M857.1 205.0L851.3 201.5M863.0 203.0L857.1 194.1M863.0 203.0L867.0 190.7M867.0 201.7L871.0 194.9" fill="none" stroke="#14c8c8" stroke-width="1.0" stroke-linejoin="round" shape-rendering="crispEdges"/></svg>
<span class="t" id="t65" style="left:836.5px;top:217.75px;font:400 12.5px/16.5px 'Liberation Sans','NanumGothic',sans-serif;color:#e4e6ea;transform:scaleX(1.0119);">D Howe</span>
<svg style="left:0;top:0" width="1147" height="817" viewBox="0 0 1147 817"><path d="M676.0 285.4L693.7 260.4L707.8 270.3M678.1 282.4L707.8 270.3M685.9 279.2L685.9 271.4M693.7 276.0L693.7 260.4M700.8 273.2L700.8 265.3M693.7 276.0L685.9 271.4M693.7 276.0L700.8 265.3" fill="none" stroke="#14c8c8" stroke-width="1.0" stroke-linejoin="round" shape-rendering="crispEdges"/></svg>
<span class="t" id="t66" style="left:675.5px;top:291.75px;font:400 12.5px/16.5px 'Liberation Sans','NanumGothic',sans-serif;color:#e4e6ea;transform:scaleX(1.0010);">Howe</span>
<svg style="left:0;top:0" width="1147" height="817" viewBox="0 0 1147 817"><path d="M715.3 287.3L733.8 257.5L745.4 273.0M717.5 283.7L745.4 273.0M729.2 279.2L733.8 257.5L737.0 276.2M729.2 279.2L725.7 270.6M737.0 276.2L739.6 265.2" fill="none" stroke="#14c8c8" stroke-width="1.0" stroke-linejoin="round" shape-rendering="crispEdges"/></svg>
<span class="t" id="t67" style="left:713.5px;top:291.75px;font:400 12.5px/16.5px 'Liberation Sans','NanumGothic',sans-serif;color:#e4e6ea;transform:scaleX(0.9594);">S Fink</span>
<svg style="left:0;top:0" width="1147" height="817" viewBox="0 0 1147 817"><path d="M759.0 285.8L778.4 259.4L791.0 270.3M761.3 282.6L791.0 270.3M769.9 279.1L769.9 271.0M778.4 275.5L778.4 259.4M784.7 272.9L784.7 264.9M769.9 279.1L778.4 259.4M784.7 272.9L778.4 259.4M769.9 271.0L765.4 280.9M784.7 264.9L788.0 271.6" fill="none" stroke="#14c8c8" stroke-width="1.0" stroke-linejoin="round" shape-rendering="crispEdges"/></svg>
<span class="t" id="t68" style="left:752.5px;top:291.75px;font:400 12.5px/16.5px 'Liberation Sans','NanumGothic',sans-serif;color:#e4e6ea;transform:scaleX(0.9813);">M Panel</span>
<svg style="left:0;top:0" width="1147" height="817" viewBox="0 0 1147 817"><path d="M803.3 285.4L823.6 259.4L835.0 274.5M805.7 282.3L835.0 274.5M811.7 274.7L817.6 279.1L817.6 267.0M817.6 279.1L823.6 259.4L827.4 276.5M827.4 264.4L827.4 276.5L831.2 269.5" fill="none" stroke="#14c8c8" stroke-width="1.0" stroke-linejoin="round" shape-rendering="crispEdges"/></svg>
<span class="t" id="t69" style="left:808.5px;top:291.75px;font:400 12.5px/16.5px 'Liberation Sans','NanumGothic',sans-serif;color:#e4e6ea;transform:scaleX(0.9282);">Fan</span>
<svg style="left:0;top:0" width="1147" height="817" viewBox="0 0 1147 817"><path d="M842.0 286.0L860.3 259.0L872.6 273.5M844.2 282.8L872.6 273.5M849.6 281.0L849.6 274.8M854.9 279.3L854.9 266.9M860.3 277.5L860.3 259.0M864.4 276.2L864.4 263.8M868.5 274.8L868.5 268.7M849.6 274.8L854.9 279.3M854.9 266.9L860.3 277.5M864.4 263.8L860.3 277.5M868.5 268.7L864.4 276.2" fill="none" stroke="#14c8c8" stroke-width="1.0" stroke-linejoin="round" shape-rendering="crispEdges"/></svg>
<span class="t" id="t70" style="left:844.5px;top:291.75px;font:400 12.5px/16.5px 'Liberation Sans','NanumGothic',sans-serif;color:#e4e6ea;transform:scaleX(0.9846);">Pratt</span>
<svg style="left:0;top:0" width="1147" height="817" viewBox="0 0 1147 817"><path d="M676.0 362.6L697.8 331.5L707.8 351.3M678.6 358.9L707.8 351.3M691.7 355.5L691.7 340.3M701.0 353.1L701.0 337.8M691.7 341.6L701.0 339.2M685.1 349.6L691.7 355.5M685.1 357.2L685.1 349.6M704.4 344.6L701.0 353.1M704.4 352.2L704.4 344.6M697.8 331.5L697.8 340.0" fill="none" stroke="#14c8c8" stroke-width="1.0" stroke-linejoin="round" shape-rendering="crispEdges"/></svg>
<span class="t" id="t71" style="left:679.5px;top:365.75px;font:400 12.5px/16.5px 'Liberation Sans','NanumGothic',sans-serif;color:#e4e6ea;transform:scaleX(1.0694);">Attic</span>
<svg style="left:0;top:0" width="1147" height="817" viewBox="0 0 1147 817"><path d="M725.3 361.7L744.5 332.5L755.8 349.4M727.6 358.2L755.8 349.4M734.4 347.9L737.7 355.0L744.5 332.5L749.0 351.5L751.3 342.6M744.5 352.9L744.5 332.5M737.7 355.0L737.7 342.8M749.0 351.5L749.0 339.3" fill="none" stroke="#14c8c8" stroke-width="1.0" stroke-linejoin="round" shape-rendering="crispEdges"/></svg>
<span class="t" id="t72" style="left:713.5px;top:365.75px;font:400 12.5px/16.5px 'Liberation Sans','NanumGothic',sans-serif;color:#e4e6ea;transform:scaleX(0.9595);">Cantilever</span>
<svg style="left:0;top:0" width="1147" height="817" viewBox="0 0 1147 817"><path d="M787.3 359.4L805.3 334.4L818.5 348.0M789.5 356.4L818.5 348.0M792.6 355.5L792.6 352.0M795.8 354.6L795.8 347.6M799.0 353.7L799.0 343.2M802.1 352.7L802.1 338.8M805.3 351.8L805.3 334.4M807.9 351.1L807.9 337.1M810.6 350.3L810.6 339.8M813.2 349.5L813.2 342.6M815.9 348.8L815.9 345.3" fill="none" stroke="#14c8c8" stroke-width="1.0" stroke-linejoin="round" shape-rendering="crispEdges"/></svg>
<span class="t" id="t73" style="left:772.5px;top:365.75px;font:400 12.5px/16.5px 'Liberation Sans','NanumGothic',sans-serif;color:#e4e6ea;transform:scaleX(0.9697);">Drop Gable</span>
<svg style="left:0;top:0" width="1147" height="817" viewBox="0 0 1147 817"><path d="M840.0 359.4L861.0 333.4L871.6 347.0M842.5 356.3L871.6 347.0M851.8 353.3L851.8 344.8M861.0 350.4L861.0 333.4M866.3 348.7L866.3 340.2M866.3 344.4L871.6 347.0" fill="none" stroke="#14c8c8" stroke-width="1.0" stroke-linejoin="round" shape-rendering="crispEdges"/></svg>
<span class="t" id="t74" style="left:840.5px;top:365.75px;font:400 12.5px/16.5px 'Liberation Sans','NanumGothic',sans-serif;color:#e4e6ea;transform:scaleX(0.9293);">Gable</span>
<svg style="left:0;top:0" width="1147" height="817" viewBox="0 0 1147 817"><path d="M687.0 433.4L706.5 406.5L717.8 423.4M687.0 433.4L706.5 419.3L717.8 423.4M706.5 419.3L706.5 406.5" fill="none" stroke="#14c8c8" stroke-width="1.0" stroke-linejoin="round" shape-rendering="crispEdges"/></svg>
<span class="t" id="t75" style="left:675.5px;top:439.75px;font:400 12.5px/16.5px 'Liberation Sans','NanumGothic',sans-serif;color:#e4e6ea;transform:scaleX(0.8976);">S Scissors</span>
<svg style="left:0;top:0" width="1147" height="817" viewBox="0 0 1147 817"><path d="M747.3 435.7L768.6 406.5L779.0 426.6M747.3 435.7L768.6 420.8L779.0 426.6M768.6 420.8L768.6 406.5M768.6 420.8L760.1 418.2M768.6 420.8L772.8 414.5M760.1 426.7L760.1 418.2M772.8 423.1L772.8 414.5" fill="none" stroke="#14c8c8" stroke-width="1.0" stroke-linejoin="round" shape-rendering="crispEdges"/></svg>
<span class="t" id="t76" style="left:734.5px;top:439.75px;font:400 12.5px/16.5px 'Liberation Sans','NanumGothic',sans-serif;color:#e4e6ea;transform:scaleX(0.9266);">Q Scissors</span>
<svg style="left:0;top:0" width="1147" height="817" viewBox="0 0 1147 817"><path d="M801.6 434.7L823.2 406.5L832.0 424.4M804.2 431.3L811.8 429.4M811.8 429.4L811.8 421.4M817.5 428.0L817.5 413.9M823.2 426.6L823.2 406.5M811.8 429.4L817.5 413.9M817.5 428.0L823.2 406.5M811.8 429.4L823.2 426.6M823.2 426.6L823.2 416.5M823.2 416.5L832.0 424.4" fill="none" stroke="#14c8c8" stroke-width="1.0" stroke-linejoin="round" shape-rendering="crispEdges"/></svg>
<span class="t" id="t77" style="left:796.5px;top:439.75px;font:400 12.5px/16.5px 'Liberation Sans','NanumGothic',sans-serif;color:#e4e6ea;transform:scaleX(0.9436);">Plenum</span>
<svg style="left:0;top:0" width="1147" height="817" viewBox="0 0 1147 817"><path d="M843.4 435.3L864.5 405.5L875.0 419.7M845.9 431.7L855.2 427.9M855.2 427.9L855.2 418.6M855.2 421.4L869.8 415.4M869.8 421.9L869.8 412.6M864.5 417.6L864.5 405.5M855.2 421.4L860.0 411.8M869.8 415.4L867.0 408.9M850.4 429.9L850.4 425.4" fill="none" stroke="#14c8c8" stroke-width="1.0" stroke-linejoin="round" shape-rendering="crispEdges"/></svg>
<span class="t" id="t78" style="left:842.5px;top:439.75px;font:400 12.5px/16.5px 'Liberation Sans','NanumGothic',sans-serif;color:#e4e6ea;transform:scaleX(1.0051);">Coffer</span>
<svg style="left:0;top:0" width="1147" height="817" viewBox="0 0 1147 817"><path d="M688.4 507.4L709.3 481.4L719.5 500.6M688.4 507.4L709.3 494.7L719.5 500.6M709.3 494.7L709.3 481.4M698.8 501.0L698.8 494.4M714.4 497.6L714.4 491.0M698.8 494.4L714.4 491.0" fill="none" stroke="#14c8c8" stroke-width="1.0" stroke-linejoin="round" shape-rendering="crispEdges"/></svg>
<span class="t" id="t79" style="left:675.5px;top:513.75px;font:400 12.5px/16.5px 'Liberation Sans','NanumGothic',sans-serif;color:#e4e6ea;transform:scaleX(0.9207);">H Scissors</span>
<svg style="left:0;top:0" width="1147" height="817" viewBox="0 0 1147 817"><path d="M742.2 508.3L763.3 479.5L773.7 498.4M742.2 508.3L763.3 493.2L773.7 498.4M763.3 493.2L763.3 479.5M763.3 493.2L757.0 488.1M763.3 493.2L766.4 485.2" fill="none" stroke="#14c8c8" stroke-width="1.0" stroke-linejoin="round" shape-rendering="crispEdges"/></svg>
<span class="t" id="t80" style="left:737.5px;top:513.75px;font:400 12.5px/16.5px 'Liberation Sans','NanumGothic',sans-serif;color:#e4e6ea;transform:scaleX(0.8892);">Scissors</span>
<svg style="left:0;top:0" width="1147" height="817" viewBox="0 0 1147 817"><path d="M797.2 510.6L818.5 480.5L828.3 496.0M799.8 507.0L811.0 502.7M805.4 504.8L805.4 499.0M811.0 502.7L811.0 491.1M805.4 504.8L811.0 491.1M811.0 502.7L816.6 483.1M811.0 502.7L818.5 489.2M818.5 489.2L824.4 495.6M824.4 495.6L824.4 489.8M824.4 495.6L828.3 494.1M818.5 489.2L818.5 480.5" fill="none" stroke="#14c8c8" stroke-width="1.0" stroke-linejoin="round" shape-rendering="crispEdges"/></svg>
<span class="t" id="t81" style="left:785.5px;top:513.75px;font:400 12.5px/16.5px 'Liberation Sans','NanumGothic',sans-serif;color:#e4e6ea;transform:scaleX(0.9537);">D Inverted</span>
<span class="t" id="t82" style="left:736.5px;top:550.75px;font:400 12.5px/16.5px 'Liberation Sans','NanumGothic',sans-serif;color:#e4e6ea;transform:scaleX(0.9925);">트러스</span>
<div style="left:622px;top:550px;width:16px;height:17px;background:#56606f;border:1px solid #7ab8e8;"></div>
<svg style="left:624px;top:552px;" width="12" height="13" viewBox="0 0 12 13"><circle cx="6" cy="6" r="5" fill="#d8d8d8"/><circle cx="7.5" cy="4.5" r="3" fill="#fff"/></svg>
<div style="left:585px;top:339px;width:92px;height:3px;background:#008c8c;"></div>
<div style="left:149px;top:311px;width:432px;height:255px;background:#f0f0f0;border-radius:8px;border:1px solid #5a5a5a;box-shadow:0 2px 8px rgba(0,0,0,.5);overflow:hidden;"><div style="left:0;top:0;width:430px;height:29px;background:#f3f3f3"></div></div>
<span class="t" id="t83" style="left:159.5px;top:319.25px;font:400 12.5px/16.5px 'Liberation Sans','NanumGothic',sans-serif;color:#8c8c8c;transform:scaleX(0.9859);-webkit-text-stroke:0;">지붕 트러스 그리기 - Attic Truss</span>
<svg style="left:559px;top:321px;" width="11" height="11" viewBox="0 0 11 11"><path d="M0 0L11 11M11 0L0 11" stroke="#777" stroke-width="1"/></svg>
<div style="left:158px;top:351px;width:416px;height:207px;background:transparent;border:1px solid #dcdcdc;"></div>
<div style="left:167px;top:365px;width:238px;height:78px;background:#000;"></div>
<svg style="left:0;top:0" width="1147" height="817" viewBox="0 0 1147 817"><g shape-rendering="crispEdges"><path d="M181 421L282.5 377L384 421" fill="none" stroke="#f2b27e" stroke-width="3" stroke-linecap="butt"/><path d="M188 418.5H377" fill="none" stroke="#f2b27e" stroke-width="3" stroke-linecap="butt"/><path d="M250.5 392V418M314.5 392V418" fill="none" stroke="#f2b27e" stroke-width="3" stroke-linecap="butt"/><path d="M252 391.5H313" fill="none" stroke="#f2b27e" stroke-width="3" stroke-linecap="butt"/><path d="M282.5 379V390" fill="none" stroke="#f2b27e" stroke-width="3" stroke-linecap="butt"/><path d="M219.5 406V418M345.5 406V418" fill="none" stroke="#f2b27e" stroke-width="3" stroke-linecap="butt"/><path d="M221 405.5L249 417.5M344 405.5L316 417.5" fill="none" stroke="#f2b27e" stroke-width="3" stroke-linecap="butt"/><path d="M181 421L282.5 377L384 421" fill="none" stroke="#000" stroke-width="1"/><path d="M188 418.5H377" fill="none" stroke="#000" stroke-width="1"/><path d="M250.5 392V418M314.5 392V418" fill="none" stroke="#000" stroke-width="1"/><path d="M252 391.5H313" fill="none" stroke="#000" stroke-width="1"/><path d="M282.5 379V390" fill="none" stroke="#000" stroke-width="1"/><path d="M219.5 406V418M345.5 406V418" fill="none" stroke="#000" stroke-width="1"/><path d="M221 405.5L249 417.5M344 405.5L316 417.5" fill="none" stroke="#000" stroke-width="1"/></g><path d="M186.5 422V437M377.5 422V437M187 429.5H274M291 429.5H377" stroke="#00e0e8" stroke-width="1.2" fill="none"/><path d="M393.5 376.5V394M393.5 406V419M387 376.5H400M387 419.5H400" stroke="#00e0e8" stroke-width="1.2" fill="none"/><path d="M344.5 384V399M347 384V399" stroke="#00e0e8" stroke-width="1.1" fill="none"/><path d="M174.5 406L178.5 414M180 403L184 411M176.5 410L182 407.5" stroke="#00e0e8" stroke-width="1.1" fill="none"/><text x="282.5" y="433" font-size="9" fill="#fff" text-anchor="middle">A</text><text x="394" y="403.5" font-size="9" fill="#fff" text-anchor="middle">B</text><text x="351" y="395" font-size="9" fill="#fff" text-anchor="middle">C</text><text x="186" y="406" font-size="9" fill="#fff" text-anchor="middle">E</text></svg>
<span class="t" id="t84" style="left:166.5px;top:453.25px;font:400 12.5px/16.5px 'Liberation Sans','NanumGothic',sans-serif;color:#000;transform:scaleX(1.0502);-webkit-text-stroke:0;">그려질 높이:</span>
<div style="left:243px;top:452px;width:162px;height:18px;background:#fff;border:1px solid #7a7a7a;"></div>
<span class="t" id="t85" style="left:245.5px;top:451.75px;font:400 12.5px/16.5px 'Liberation Sans','NanumGothic',sans-serif;color:#000;transform:scaleX(0.8629);-webkit-text-stroke:0;">3000</span>
<span class="t" id="t86" style="left:166.5px;top:482.75px;font:400 12.5px/16.5px 'Liberation Sans','NanumGothic',sans-serif;color:#000;transform:scaleX(1.0575);-webkit-text-stroke:0;">트러스 배열 간격:</span>
<div style="left:271px;top:482px;width:134px;height:18px;background:#fff;border:1px solid #7a7a7a;"></div>
<span class="t" id="t87" style="left:273.5px;top:481.75px;font:400 12.5px/16.5px 'Liberation Sans','NanumGothic',sans-serif;color:#000;transform:scaleX(0.8270);-webkit-text-stroke:0;">1200</span>
<span class="t" id="t88" style="left:166.5px;top:512.75px;font:400 12.5px/16.5px 'Liberation Sans','NanumGothic',sans-serif;color:#000;transform:scaleX(1.0502);-webkit-text-stroke:0;">트러스 개수:</span>
<div style="left:243px;top:512px;width:162px;height:18px;background:#fff;border:1px solid #7a7a7a;"></div>
<span class="t" id="t89" style="left:245.5px;top:511.75px;font:400 12.5px/16.5px 'Liberation Sans','NanumGothic',sans-serif;color:#000;transform:scaleX(0.7191);-webkit-text-stroke:0;">16</span>
<span class="t" id="t90" style="left:166.5px;top:537.25px;font:400 12.5px/16.5px 'Liberation Sans','NanumGothic',sans-serif;color:#000;transform:scaleX(0.9995);-webkit-text-stroke:0;">CYCAD FANTASMO</span>
<span class="t" id="t91" style="left:413.5px;top:368.25px;font:400 12.5px/16.5px 'Liberation Sans','NanumGothic',sans-serif;color:#000;transform:scaleX(1.0410);-webkit-text-stroke:0;">A: 길이:</span>
<div style="left:465px;top:368px;width:100px;height:18px;background:#fff;border:1px solid #7a7a7a;"></div>
<span class="t" id="t92" style="left:467.5px;top:367.75px;font:400 12.5px/16.5px 'Liberation Sans','NanumGothic',sans-serif;color:#000;transform:scaleX(0.8629);-webkit-text-stroke:0;">15000</span>
<span class="t" id="t93" style="left:413.5px;top:393.25px;font:400 12.5px/16.5px 'Liberation Sans','NanumGothic',sans-serif;color:#000;transform:scaleX(1.0372);-webkit-text-stroke:0;">B: 트러스 높이:</span>
<div style="left:505px;top:392px;width:60px;height:18px;background:#fff;border:1px solid #7a7a7a;"></div>
<span class="t" id="t94" style="left:507.5px;top:391.75px;font:400 12.5px/16.5px 'Liberation Sans','NanumGothic',sans-serif;color:#000;transform:scaleX(0.8270);-webkit-text-stroke:0;">3200</span>
<span class="t" id="t95" style="left:413.5px;top:417.25px;font:400 12.5px/16.5px 'Liberation Sans','NanumGothic',sans-serif;color:#000;transform:scaleX(1.0486);-webkit-text-stroke:0;">C: 판재 폭:</span>
<div style="left:482px;top:416px;width:83px;height:18px;background:#fff;border:1px solid #7a7a7a;"></div>
<span class="t" id="t96" style="left:484.5px;top:415.75px;font:400 12.5px/16.5px 'Liberation Sans','NanumGothic',sans-serif;color:#000;transform:scaleX(0.8629);-webkit-text-stroke:0;">200</span>
<span class="t" id="t97" style="left:413.5px;top:441.25px;font:400 12.5px/16.5px 'Liberation Sans','NanumGothic',sans-serif;color:#000;transform:scaleX(1.0297);-webkit-text-stroke:0;">D: 판재 두께:</span>
<div style="left:493px;top:440px;width:72px;height:18px;background:#fff;border:1px solid #7a7a7a;"></div>
<span class="t" id="t98" style="left:495.5px;top:439.75px;font:400 12.5px/16.5px 'Liberation Sans','NanumGothic',sans-serif;color:#000;transform:scaleX(0.8629);-webkit-text-stroke:0;">100</span>
<span class="t" id="t99" style="left:413.5px;top:465.25px;font:400 12.5px/16.5px 'Liberation Sans','NanumGothic',sans-serif;color:#000;transform:scaleX(1.0399);-webkit-text-stroke:0;">E: 처마 돌출:</span>
<div style="left:493px;top:464px;width:72px;height:18px;background:#fff;border:1px solid #7a7a7a;"></div>
<span class="t" id="t100" style="left:495.5px;top:463.75px;font:400 12.5px/16.5px 'Liberation Sans','NanumGothic',sans-serif;color:#000;transform:scaleX(0.8629);-webkit-text-stroke:0;">500</span>
<svg style="left:413px;top:488px;" width="14" height="14" viewBox="0 0 14 14"><circle cx="7" cy="7" r="6.5" fill="#0067c0"/><circle cx="7" cy="7" r="2.8" fill="#fff"/></svg>
<span class="t" id="t101" style="left:428.5px;top:487.75px;font:400 12.5px/16.5px 'Liberation Sans','NanumGothic',sans-serif;color:#000;transform:scaleX(1.0498);-webkit-text-stroke:0;">지붕 있음</span>
<svg style="left:493px;top:488px;" width="14" height="14" viewBox="0 0 14 14"><circle cx="7" cy="7" r="6" fill="#f6f6f6" stroke="#666" stroke-width="1"/></svg>
<span class="t" id="t102" style="left:508.5px;top:487.75px;font:400 12.5px/16.5px 'Liberation Sans','NanumGothic',sans-serif;color:#000;transform:scaleX(1.0498);-webkit-text-stroke:0;">지붕 없음</span>
<span class="t" id="t103" style="left:413.5px;top:512.75px;font:400 12.5px/16.5px 'Liberation Sans','NanumGothic',sans-serif;color:#000;transform:scaleX(1.0379);-webkit-text-stroke:0;">지붕 두께:</span>
<div style="left:477px;top:512px;width:88px;height:18px;background:#fff;border:1px solid #7a7a7a;"></div>
<span class="t" id="t104" style="left:479.5px;top:511.75px;font:400 12.5px/16.5px 'Liberation Sans','NanumGothic',sans-serif;color:#000;transform:scaleX(0.7910);-webkit-text-stroke:0;">50</span>
<div style="left:458px;top:535px;width:62px;height:19px;background:#fdfdfd;border:1px solid #0078d4;border-radius:4px;"></div>
<span class="t" id="t105" style="left:477.5px;top:536.75px;font:400 12.5px/16.5px 'Liberation Sans','NanumGothic',sans-serif;color:#000;transform:scaleX(0.9781);-webkit-text-stroke:0;">확인</span>
<svg style="left:0;top:0" width="1147" height="817" viewBox="0 0 1147 817"><rect x="883" y="86" width="1.3" height="1.3" fill="#16a6e6"/><rect x="883" y="89" width="1.3" height="1.3" fill="#16a6e6"/><rect x="886" y="86" width="1.3" height="1.3" fill="#16a6e6"/><rect x="886" y="89" width="1.3" height="1.3" fill="#16a6e6"/><rect x="889" y="86" width="1.3" height="1.3" fill="#16a6e6"/><rect x="889" y="89" width="1.3" height="1.3" fill="#16a6e6"/><rect x="892" y="86" width="1.3" height="1.3" fill="#16a6e6"/><rect x="892" y="89" width="1.3" height="1.3" fill="#16a6e6"/><rect x="895" y="86" width="1.3" height="1.3" fill="#16a6e6"/><rect x="895" y="89" width="1.3" height="1.3" fill="#16a6e6"/><rect x="883" y="110" width="1.3" height="1.3" fill="#16a6e6"/><rect x="883" y="113" width="1.3" height="1.3" fill="#16a6e6"/><rect x="886" y="110" width="1.3" height="1.3" fill="#16a6e6"/><rect x="886" y="113" width="1.3" height="1.3" fill="#16a6e6"/><rect x="889" y="110" width="1.3" height="1.3" fill="#16a6e6"/><rect x="889" y="113" width="1.3" height="1.3" fill="#16a6e6"/><rect x="892" y="110" width="1.3" height="1.3" fill="#16a6e6"/><rect x="892" y="113" width="1.3" height="1.3" fill="#16a6e6"/><rect x="895" y="110" width="1.3" height="1.3" fill="#16a6e6"/><rect x="895" y="113" width="1.3" height="1.3" fill="#16a6e6"/><rect x="883" y="134" width="1.3" height="1.3" fill="#16a6e6"/><rect x="883" y="137" width="1.3" height="1.3" fill="#16a6e6"/><rect x="886" y="134" width="1.3" height="1.3" fill="#16a6e6"/><rect x="886" y="137" width="1.3" height="1.3" fill="#16a6e6"/><rect x="889" y="134" width="1.3" height="1.3" fill="#16a6e6"/><rect x="889" y="137" width="1.3" height="1.3" fill="#16a6e6"/><rect x="892" y="134" width="1.3" height="1.3" fill="#16a6e6"/><rect x="892" y="137" width="1.3" height="1.3" fill="#16a6e6"/><rect x="895" y="134" width="1.3" height="1.3" fill="#16a6e6"/><rect x="895" y="137" width="1.3" height="1.3" fill="#16a6e6"/><rect x="906" y="86" width="1.3" height="1.3" fill="#16a6e6"/><rect x="906" y="89" width="1.3" height="1.3" fill="#16a6e6"/><rect x="909" y="86" width="1.3" height="1.3" fill="#16a6e6"/><rect x="909" y="89" width="1.3" height="1.3" fill="#16a6e6"/><rect x="912" y="86" width="1.3" height="1.3" fill="#16a6e6"/><rect x="912" y="89" width="1.3" height="1.3" fill="#16a6e6"/><rect x="915" y="86" width="1.3" height="1.3" fill="#16a6e6"/><rect x="915" y="89" width="1.3" height="1.3" fill="#16a6e6"/><rect x="918" y="86" width="1.3" height="1.3" fill="#16a6e6"/><rect x="918" y="89" width="1.3" height="1.3" fill="#16a6e6"/><rect x="906" y="110" width="1.3" height="1.3" fill="#16a6e6"/><rect x="906" y="113" width="1.3" height="1.3" fill="#16a6e6"/><rect x="909" y="110" width="1.3" height="1.3" fill="#16a6e6"/><rect x="909" y="113" width="1.3" height="1.3" fill="#16a6e6"/><rect x="912" y="110" width="1.3" height="1.3" fill="#16a6e6"/><rect x="912" y="113" width="1.3" height="1.3" fill="#16a6e6"/><rect x="915" y="110" width="1.3" height="1.3" fill="#16a6e6"/><rect x="915" y="113" width="1.3" height="1.3" fill="#16a6e6"/><rect x="918" y="110" width="1.3" height="1.3" fill="#16a6e6"/><rect x="918" y="113" width="1.3" height="1.3" fill="#16a6e6"/><rect x="906" y="134" width="1.3" height="1.3" fill="#16a6e6"/><rect x="906" y="137" width="1.3" height="1.3" fill="#16a6e6"/><rect x="909" y="134" width="1.3" height="1.3" fill="#16a6e6"/><rect x="909" y="137" width="1.3" height="1.3" fill="#16a6e6"/><rect x="912" y="134" width="1.3" height="1.3" fill="#16a6e6"/><rect x="912" y="137" width="1.3" height="1.3" fill="#16a6e6"/><rect x="915" y="134" width="1.3" height="1.3" fill="#16a6e6"/><rect x="915" y="137" width="1.3" height="1.3" fill="#16a6e6"/><rect x="918" y="134" width="1.3" height="1.3" fill="#16a6e6"/><rect x="918" y="137" width="1.3" height="1.3" fill="#16a6e6"/><text x="888.75" y="101" font-size="11" font-weight="700" fill="#16a6e6" textLength="3.5" lengthAdjust="spacingAndGlyphs">1</text><text x="909.65" y="101" font-size="11" font-weight="700" fill="#16a6e6" textLength="11.5" lengthAdjust="spacingAndGlyphs">25</text><text x="887.65" y="125" font-size="11" font-weight="700" fill="#16a6e6" textLength="5.5" lengthAdjust="spacingAndGlyphs">5</text><text x="909.65" y="125" font-size="11" font-weight="700" fill="#16a6e6" textLength="11.5" lengthAdjust="spacingAndGlyphs">50</text><text x="884.75" y="149" font-size="11" font-weight="700" fill="#16a6e6" textLength="10.5" lengthAdjust="spacingAndGlyphs">10</text><text x="905.75" y="149" font-size="11" font-weight="700" fill="#16a6e6" textLength="16.5" lengthAdjust="spacingAndGlyphs">100</text></svg>
</div></body></html>
